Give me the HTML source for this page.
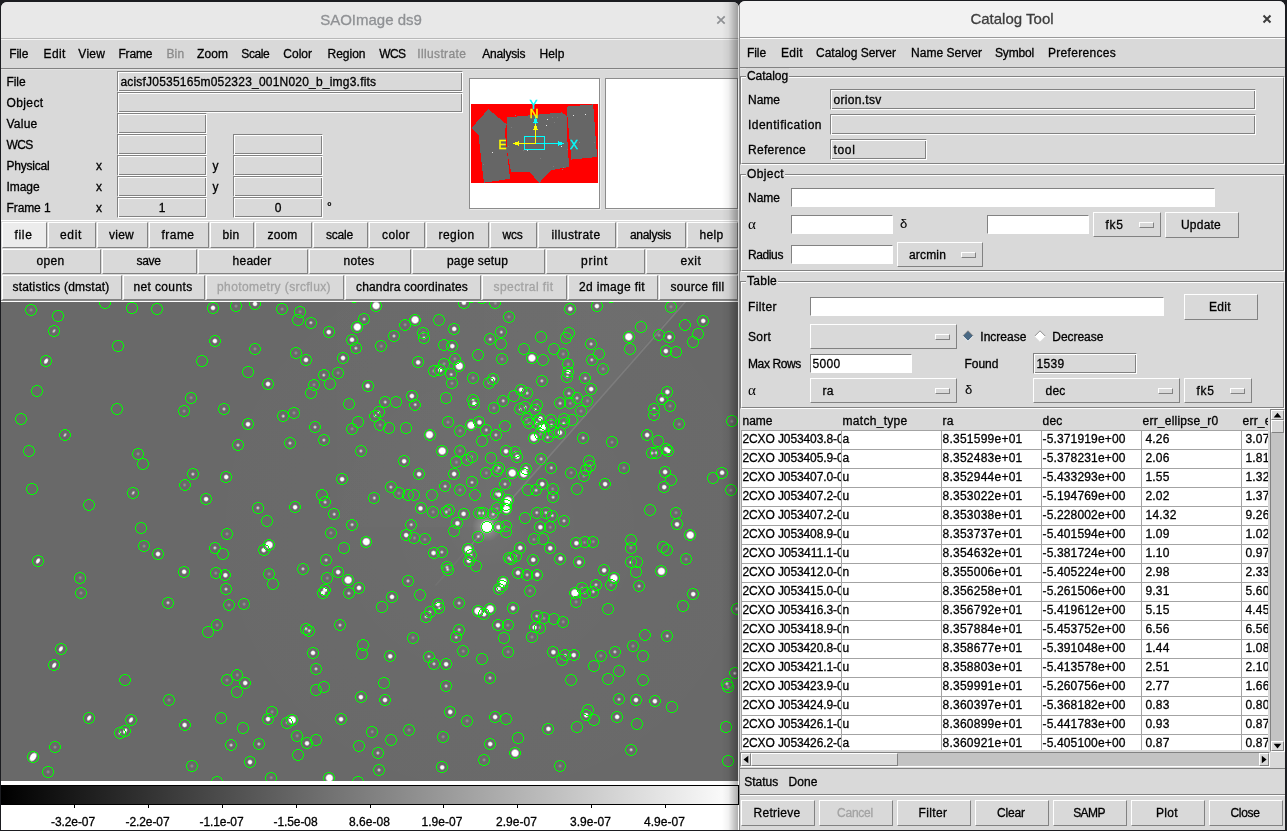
<!DOCTYPE html>
<html><head><meta charset="utf-8"><title>SAOImage ds9</title>
<style>
html,body{margin:0;padding:0;}
body{width:1287px;height:831px;overflow:hidden;background:#1b1c20;position:relative;
 font-family:"Liberation Sans",sans-serif;font-size:12px;color:#000;line-height:16px;}
.abs,.w div,.w span{position:absolute;}
div,span{box-sizing:border-box;}
.w{position:absolute;overflow:hidden;will-change:transform;-webkit-text-stroke:0.3px;}
.t{white-space:pre;position:absolute;height:16px;line-height:16px;}
.btn{position:absolute;background:#d9d9d9;border:1px solid;border-color:#fff #828282 #828282 #fff;
 text-align:center;white-space:pre;padding-right:2px;}
.btn.act{background:#ececec;}
.dis{color:#a3a3a3;}
.mdis{color:#8c8c8c;}
.ent{position:absolute;background:#d9d9d9;border:1px solid;border-color:#828282 #fff #fff #828282;white-space:pre;overflow:hidden;box-shadow:inset 1px 1px 0 #fff,inset -1px -1px 0 #828282;}
.ent.wh{background:#fff;box-shadow:none;}
.mb{position:absolute;background:#d9d9d9;border:1px solid;border-color:#fff #828282 #828282 #fff;white-space:pre;}
.mb i{position:absolute;right:6px;top:50%;margin-top:-3px;width:15px;height:6px;background:#d9d9d9;border:1px solid;border-color:#fff #828282 #828282 #fff;box-sizing:border-box;}
.lf{position:absolute;background:#d9d9d9;white-space:pre;height:16px;line-height:16px;}
.hl{position:absolute;height:1px;}
.cell{position:absolute;width:101px;height:20px;border:1px solid #a3a3a3;background:#fff;overflow:hidden;white-space:pre;line-height:16px;}
</style></head>
<body>
<div class="w" id="ds9" style="left:1px;top:2px;width:738px;height:828px;background:#d9d9d9;border-radius:6px 6px 0 0;">
<div class="abs" style="left:0;top:0;width:738px;height:36px;background:#e8e8e8;"></div>
<div class="hl" style="left:0px;top:36px;width:737px;background:#b8b8b8;"></div>
<div class="hl" style="left:0px;top:37px;width:737px;background:#f4f4f4;"></div>
<span class="t" style="left:1px;width:738px;text-align:center;top:8px;height:20px;line-height:20px;font-size:15px;color:#8f9194;">SAOImage ds9</span>
<svg style="position:absolute;left:715px;top:13px" width="10" height="10" viewBox="0 0 10 10"><path d="M1.3 1.3 L8.7 8.7 M8.7 1.3 L1.3 8.7" stroke="#8f9194" stroke-width="1.7" fill="none"/></svg>
<span class="t " style="left:8.3px;top:44px;letter-spacing:-0.09px;">File</span>
<span class="t " style="left:42.6px;top:44px;letter-spacing:0.33px;">Edit</span>
<span class="t " style="left:77.3px;top:44px;letter-spacing:0.3px;">View</span>
<span class="t " style="left:117.4px;top:44px;letter-spacing:-0.13px;">Frame</span>
<span class="t mdis" style="left:165.4px;top:44px;letter-spacing:0.22px;">Bin</span>
<span class="t " style="left:196px;top:44px;letter-spacing:0.08px;">Zoom</span>
<span class="t " style="left:240.3px;top:44px;letter-spacing:-0.4px;">Scale</span>
<span class="t " style="left:282.2px;top:44px;letter-spacing:0.06px;">Color</span>
<span class="t " style="left:326.5px;top:44px;letter-spacing:-0.01px;">Region</span>
<span class="t " style="left:378.3px;top:44px;letter-spacing:-0.6px;">WCS</span>
<span class="t mdis" style="left:416.2px;top:44px;letter-spacing:0.37px;">Illustrate</span>
<span class="t " style="left:481.3px;top:44px;letter-spacing:-0.21px;">Analysis</span>
<span class="t " style="left:538.6px;top:44px;letter-spacing:0.08px;">Help</span>
<div class="hl" style="left:0px;top:66px;width:737px;background:#828282;"></div>
<div class="hl" style="left:0px;top:67px;width:737px;background:#e4e4e4;"></div>
<span class="t " style="left:5.5px;top:72px;letter-spacing:-0.09px;">File</span>
<span class="t " style="left:5.5px;top:93px;letter-spacing:0.39px;">Object</span>
<span class="t " style="left:5.5px;top:114px;letter-spacing:0.24px;">Value</span>
<span class="t " style="left:5.5px;top:135px;letter-spacing:-0.6px;">WCS</span>
<span class="t " style="left:5.5px;top:156px;letter-spacing:-0.21px;">Physical</span>
<span class="t " style="left:5.5px;top:177px;letter-spacing:-0.07px;">Image</span>
<span class="t " style="left:5.5px;top:198px;letter-spacing:-0.1px;">Frame 1</span>
<span class="t " style="left:95px;top:156px;">x</span>
<span class="t " style="left:95px;top:177px;">x</span>
<span class="t " style="left:95px;top:198px;">x</span>
<span class="t " style="left:211.6px;top:156px;">y</span>
<span class="t " style="left:211.6px;top:177px;">y</span>
<span class="t " style="left:326px;top:197px;">°</span>
<div class="ent " style="left:116px;top:69px;width:346px;height:21px;line-height:20px;letter-spacing:0.21px;padding-left:2.4px;">acisfJ0535165m052323_001N020_b_img3.fits</div>
<div class="ent " style="left:116px;top:90px;width:346px;height:21px;"></div>
<div class="ent " style="left:116px;top:111px;width:90px;height:21px;"></div>
<div class="ent " style="left:116px;top:132px;width:90px;height:21px;"></div>
<div class="ent " style="left:232px;top:132px;width:90px;height:21px;"></div>
<div class="ent " style="left:116px;top:153px;width:90px;height:21px;"></div>
<div class="ent " style="left:232px;top:153px;width:90px;height:21px;"></div>
<div class="ent " style="left:116px;top:174px;width:90px;height:21px;"></div>
<div class="ent " style="left:232px;top:174px;width:90px;height:21px;"></div>
<div class="ent " style="left:116px;top:195px;width:90px;height:21px;line-height:20px;text-align:center;">1</div>
<div class="ent " style="left:232px;top:195px;width:90px;height:21px;line-height:20px;text-align:center;">0</div>
<div class="abs" style="left:468px;top:76px;width:131px;height:131px;background:#fff;border:1px solid #8c8c8c;box-shadow:1px 1px 0 #ececec;"></div>
<div class="abs" style="left:604px;top:76px;width:133px;height:131px;background:#fff;border:1px solid #8c8c8c;box-shadow:1px 1px 0 #ececec;"></div>
<svg style="position:absolute;left:0;top:0" width="737" height="230" viewBox="0 0 737 230" shape-rendering="crispEdges">
<rect x="470" y="102" width="127" height="79" fill="#ff0000"/>
<polygon points="487.3,107.2 505.8,122.4 503.6,127.8 509.0,176.8 482.9,180.7 477.5,133.3 470.3,126.3" fill="#666666"/>
<polygon points="505.8,115.4 561.3,110.4 566.0,114.8 566.7,148.5 568.4,164.8 550.4,168.1 538.4,180.7 528.6,170.3 510.1,170.3 506.4,150.7" fill="#666666"/>
<polygon points="565.6,104.6 592.2,102.4 596.1,155.0 570.4,157.6" fill="#666666"/>
<rect x="507" y="144" width="1" height="1" fill="#7c7c7c"/>
<rect x="522" y="148" width="1" height="1" fill="#7c7c7c"/>
<rect x="551" y="115" width="1" height="1" fill="#7c7c7c"/>
<rect x="482" y="162" width="1" height="1" fill="#7c7c7c"/>
<rect x="510" y="125" width="1" height="1" fill="#7c7c7c"/>
<rect x="593" y="140" width="1" height="1" fill="#7c7c7c"/>
<rect x="575" y="140" width="1" height="1" fill="#7c7c7c"/>
<rect x="553" y="120" width="1" height="1" fill="#7c7c7c"/>
<rect x="552" y="164" width="1" height="1" fill="#7c7c7c"/>
<rect x="539" y="156" width="1" height="1" fill="#7c7c7c"/>
<rect x="556" y="115" width="1" height="1" fill="#7c7c7c"/>
<rect x="566" y="147" width="1" height="1" fill="#7c7c7c"/>
<rect x="514" y="113" width="1" height="1" fill="#7c7c7c"/>
<rect x="578" y="140" width="1" height="1" fill="#7c7c7c"/>
<rect x="562" y="165" width="1" height="1" fill="#7c7c7c"/>
<rect x="561" y="167" width="1" height="1" fill="#7c7c7c"/>
<rect x="546" y="117" width="1" height="1" fill="#e8e8e8"/>
<rect x="545" y="123" width="1" height="1" fill="#e8e8e8"/>
<rect x="584" y="112" width="1" height="1" fill="#e8e8e8"/>
<rect x="572" y="113" width="1" height="1" fill="#e8e8e8"/>
<rect x="560" y="144" width="1" height="1" fill="#e8e8e8"/>
<rect x="526" y="148" width="1" height="1" fill="#e8e8e8"/>
<rect x="491" y="150" width="1" height="1" fill="#e8e8e8"/>
<rect x="523.5" y="134.5" width="20" height="13" fill="none" stroke="#00ffff" stroke-width="1"/>
<path d="M534.5 141.5 H563 M534.5 141.5 V115" stroke="#00ffff" stroke-width="1" fill="none"/>
<path d="M563 141.5 l-6 -2.5 v5 z" fill="#00ffff"/>
<path d="M534.5 115 l-2.5 6 h5 z" fill="#00ffff"/>
<path d="M534.5 141.5 H512 M534.5 141.5 V122" stroke="#ffff00" stroke-width="1" fill="none"/>
<path d="M512 141.5 l6 -2.5 v5 z" fill="#ffff00"/>
<path d="M534.5 122 l-2.5 6 h5 z" fill="#ffff00"/>
</svg>
<svg style="position:absolute;left:0;top:0" width="737" height="230" viewBox="0 0 737 230">
<text x="532.5" y="106.5" text-anchor="middle" font-family="Liberation Sans, sans-serif" font-size="12" fill="#00ffff" stroke="#00ffff" stroke-width="0.4">Y</text>
<text x="533.0" y="116.3" text-anchor="middle" font-family="Liberation Sans, sans-serif" font-size="12" fill="#ffff00" stroke="#ffff00" stroke-width="0.4">N</text>
<text x="501.6" y="147.1" text-anchor="middle" font-family="Liberation Sans, sans-serif" font-size="12" fill="#ffff00" stroke="#ffff00" stroke-width="0.4">E</text>
<text x="573.0" y="147.1" text-anchor="middle" font-family="Liberation Sans, sans-serif" font-size="12" fill="#00ffff" stroke="#00ffff" stroke-width="0.4">X</text>
</svg>
<div class="hl" style="left:0px;top:218px;width:737px;background:#fff;"></div>
<div class="btn act" style="left:1px;top:220px;width:45px;height:26px;line-height:24px;letter-spacing:0.66px;">file</div>
<div class="btn " style="left:47px;top:220px;width:48px;height:26px;line-height:24px;letter-spacing:0.66px;">edit</div>
<div class="btn " style="left:96px;top:220px;width:51px;height:26px;line-height:24px;letter-spacing:0.25px;">view</div>
<div class="btn " style="left:148px;top:220px;width:60px;height:26px;line-height:24px;letter-spacing:0.47px;">frame</div>
<div class="btn " style="left:209px;top:220px;width:44px;height:26px;line-height:24px;letter-spacing:0.33px;">bin</div>
<div class="btn " style="left:254px;top:220px;width:57px;height:26px;line-height:24px;letter-spacing:0.16px;">zoom</div>
<div class="btn " style="left:312px;top:220px;width:55px;height:26px;line-height:24px;letter-spacing:-0.2px;">scale</div>
<div class="btn " style="left:368px;top:220px;width:56px;height:26px;line-height:24px;letter-spacing:0.4px;">color</div>
<div class="btn " style="left:425px;top:220px;width:63px;height:26px;line-height:24px;letter-spacing:0.44px;">region</div>
<div class="btn " style="left:489px;top:220px;width:47px;height:26px;line-height:24px;letter-spacing:-0.22px;">wcs</div>
<div class="btn " style="left:537px;top:220px;width:78px;height:26px;line-height:24px;letter-spacing:0.43px;">illustrate</div>
<div class="btn " style="left:616px;top:220px;width:69px;height:26px;line-height:24px;letter-spacing:-0.29px;">analysis</div>
<div class="btn " style="left:686px;top:220px;width:51px;height:26px;line-height:24px;letter-spacing:0.33px;">help</div>
<div class="btn " style="left:1px;top:247px;width:99px;height:25px;line-height:22px;letter-spacing:0.33px;">open</div>
<div class="btn " style="left:101px;top:247px;width:95px;height:25px;line-height:22px;letter-spacing:-0.34px;">save</div>
<div class="btn " style="left:197px;top:247px;width:110px;height:25px;line-height:22px;letter-spacing:0.27px;">header</div>
<div class="btn " style="left:308px;top:247px;width:102px;height:25px;line-height:22px;letter-spacing:0.33px;">notes</div>
<div class="btn " style="left:411px;top:247px;width:133px;height:25px;line-height:22px;letter-spacing:0.16px;">page setup</div>
<div class="btn " style="left:545px;top:247px;width:99px;height:25px;line-height:22px;letter-spacing:0.73px;">print</div>
<div class="btn " style="left:645px;top:247px;width:92px;height:25px;line-height:22px;letter-spacing:0.58px;">exit</div>
<div class="btn " style="left:1px;top:273px;width:120px;height:25px;line-height:22px;letter-spacing:0.19px;">statistics (dmstat)</div>
<div class="btn " style="left:122px;top:273px;width:82px;height:25px;line-height:22px;letter-spacing:0.37px;">net counts</div>
<div class="btn dis" style="left:205px;top:273px;width:138px;height:25px;line-height:22px;letter-spacing:0.4px;">photometry (srcflux)</div>
<div class="btn " style="left:344px;top:273px;width:136px;height:25px;line-height:22px;letter-spacing:0.17px;">chandra coordinates</div>
<div class="btn dis" style="left:481px;top:273px;width:85px;height:25px;line-height:22px;letter-spacing:0.44px;">spectral fit</div>
<div class="btn " style="left:567px;top:273px;width:90px;height:25px;line-height:22px;letter-spacing:0.33px;">2d image fit</div>
<div class="btn " style="left:658px;top:273px;width:79px;height:25px;line-height:22px;letter-spacing:0.3px;">source fill</div>
<div class="hl" style="left:0px;top:298px;width:737px;background:#8a8a8a;"></div>
<div class="hl" style="left:0px;top:299px;width:737px;background:#fff;"></div>
<div class="abs" id="img" style="left:0px;top:300px;width:737px;height:479px;background:#696969;overflow:hidden;"><svg style="position:absolute;left:0;top:0" width="737" height="479" viewBox="0 0 737 479">
<defs><radialGradient id="glow"><stop offset="0" stop-color="#fff" stop-opacity="0.05"/><stop offset="0.12" stop-color="#fff" stop-opacity="0.022"/><stop offset="0.5" stop-color="#fff" stop-opacity="0.008"/><stop offset="1" stop-color="#fff" stop-opacity="0"/></radialGradient><radialGradient id="s1"><stop offset="0" stop-color="#fff" stop-opacity="0.32"/><stop offset="1" stop-color="#fff" stop-opacity="0"/></radialGradient><radialGradient id="s2"><stop offset="0" stop-color="#fff" stop-opacity="0.95"/><stop offset="0.4" stop-color="#fff" stop-opacity="0.5"/><stop offset="1" stop-color="#fff" stop-opacity="0"/></radialGradient><radialGradient id="s3"><stop offset="0" stop-color="#fff" stop-opacity="1"/><stop offset="0.5" stop-color="#fff" stop-opacity="0.95"/><stop offset="1" stop-color="#fff" stop-opacity="0"/></radialGradient><radialGradient id="s4"><stop offset="0" stop-color="#fff" stop-opacity="1"/><stop offset="0.62" stop-color="#fff" stop-opacity="1"/><stop offset="1" stop-color="#fff" stop-opacity="0"/></radialGradient><linearGradient id="strk" x1="0" y1="0" x2="1" y2="0"><stop offset="0" stop-color="#fff" stop-opacity="0"/><stop offset="0.5" stop-color="#fff" stop-opacity="0.10"/><stop offset="1" stop-color="#fff" stop-opacity="0"/></linearGradient></defs>
<circle cx="486" cy="225" r="330" fill="url(#glow)"/>
<defs><linearGradient id="hp" x1="0" y1="0" x2="1" y2="0"><stop offset="0" stop-color="#fff" stop-opacity="0"/><stop offset="1" stop-color="#fff" stop-opacity="0.035"/></linearGradient></defs>
<polygon points="682,0 486,225 299,225 299,0" fill="url(#hp)"/>
<g transform="translate(486 225) rotate(-48.64)"><rect x="-30" y="-0.8" width="390" height="1.6" fill="#909090" opacity="0.5"/><rect x="-78" y="-0.8" width="48" height="1.6" fill="#8c8c8c" opacity="0.16"/></g>
<circle cx="30.1" cy="8.0" r="2.2" fill="url(#s1)"/>
<ellipse cx="53.0" cy="29.0" rx="2.8" ry="1.8" transform="rotate(-58 53.0 29.0)" fill="url(#s2)"/>
<ellipse cx="45.1" cy="59.1" rx="3.6" ry="2.3" transform="rotate(-58 45.1 59.1)" fill="url(#s3)"/>
<circle cx="183.1" cy="109.1" r="2.2" fill="url(#s1)"/>
<circle cx="212.0" cy="5.9" r="2.9" fill="url(#s3)"/>
<circle cx="235.0" cy="4.1" r="2.2" fill="url(#s1)"/>
<circle cx="254.0" cy="1.9" r="2.9" fill="url(#s3)"/>
<circle cx="281.1" cy="7.1" r="2.2" fill="url(#s1)"/>
<circle cx="299.1" cy="9.8" r="2.2" fill="url(#s1)"/>
<circle cx="309.9" cy="20.7" r="2.2" fill="url(#s2)"/>
<circle cx="327.8" cy="30.1" r="2.9" fill="url(#s3)"/>
<circle cx="363.1" cy="17.1" r="2.2" fill="url(#s2)"/>
<circle cx="356.3" cy="25.0" r="4.4" fill="url(#s4)"/>
<circle cx="351.0" cy="37.7" r="2.9" fill="url(#s3)"/>
<circle cx="354.9" cy="46.2" r="2.2" fill="url(#s2)"/>
<circle cx="213.9" cy="39.0" r="2.9" fill="url(#s3)"/>
<circle cx="254.0" cy="46.9" r="2.2" fill="url(#s1)"/>
<circle cx="294.9" cy="51.0" r="2.2" fill="url(#s1)"/>
<circle cx="305.0" cy="57.9" r="2.9" fill="url(#s3)"/>
<circle cx="342.0" cy="56.0" r="2.9" fill="url(#s3)"/>
<circle cx="322.8" cy="73.1" r="2.2" fill="url(#s2)"/>
<circle cx="337.1" cy="70.9" r="2.2" fill="url(#s1)"/>
<circle cx="267.0" cy="82.0" r="2.9" fill="url(#s3)"/>
<circle cx="313.0" cy="82.8" r="2.2" fill="url(#s1)"/>
<circle cx="366.7" cy="83.9" r="2.9" fill="url(#s3)"/>
<circle cx="190.1" cy="95.8" r="2.2" fill="url(#s1)"/>
<circle cx="223.0" cy="107.0" r="2.2" fill="url(#s2)"/>
<circle cx="293.0" cy="110.9" r="2.2" fill="url(#s1)"/>
<circle cx="282.2" cy="114.1" r="2.2" fill="url(#s2)"/>
<circle cx="375.1" cy="3.6" r="4.4" fill="url(#s4)"/>
<circle cx="462.9" cy="0.7" r="2.9" fill="url(#s3)"/>
<circle cx="494.4" cy="1.2" r="2.2" fill="url(#s1)"/>
<circle cx="507.9" cy="14.9" r="2.2" fill="url(#s1)"/>
<circle cx="414.1" cy="17.8" r="4.4" fill="url(#s4)"/>
<circle cx="404.1" cy="22.8" r="2.2" fill="url(#s1)"/>
<circle cx="453.2" cy="26.9" r="2.9" fill="url(#s3)"/>
<circle cx="422.1" cy="30.8" r="2.2" fill="url(#s1)"/>
<circle cx="423.0" cy="35.8" r="2.2" fill="url(#s2)"/>
<circle cx="393.0" cy="34.0" r="2.2" fill="url(#s2)"/>
<circle cx="380.3" cy="44.1" r="2.2" fill="url(#s1)"/>
<circle cx="500.3" cy="30.1" r="2.2" fill="url(#s2)"/>
<circle cx="489.2" cy="37.3" r="2.2" fill="url(#s2)"/>
<circle cx="451.3" cy="44.1" r="2.9" fill="url(#s3)"/>
<circle cx="501.0" cy="57.1" r="2.2" fill="url(#s1)"/>
<circle cx="530.9" cy="56.0" r="4.4" fill="url(#s4)"/>
<circle cx="417.1" cy="60.4" r="2.9" fill="url(#s3)"/>
<circle cx="453.9" cy="56.8" r="2.2" fill="url(#s1)"/>
<circle cx="443.1" cy="61.8" r="2.2" fill="url(#s1)"/>
<circle cx="458.3" cy="64.0" r="4.4" fill="url(#s4)"/>
<circle cx="439.2" cy="67.9" r="2.9" fill="url(#s3)"/>
<circle cx="432.5" cy="69.0" r="2.2" fill="url(#s1)"/>
<circle cx="450.2" cy="72.4" r="2.2" fill="url(#s2)"/>
<circle cx="451.0" cy="81.3" r="2.2" fill="url(#s1)"/>
<circle cx="472.1" cy="76.0" r="2.2" fill="url(#s1)"/>
<circle cx="492.1" cy="77.0" r="2.9" fill="url(#s3)"/>
<circle cx="487.7" cy="81.0" r="2.2" fill="url(#s1)"/>
<circle cx="540.9" cy="78.9" r="2.2" fill="url(#s2)"/>
<circle cx="520.1" cy="87.8" r="2.9" fill="url(#s3)"/>
<circle cx="526.1" cy="91.1" r="2.2" fill="url(#s2)"/>
<circle cx="410.9" cy="94.0" r="2.9" fill="url(#s3)"/>
<circle cx="414.2" cy="102.7" r="2.2" fill="url(#s2)"/>
<circle cx="472.1" cy="97.9" r="2.2" fill="url(#s2)"/>
<circle cx="473.3" cy="101.8" r="2.9" fill="url(#s3)"/>
<circle cx="384.2" cy="100.1" r="2.2" fill="url(#s2)"/>
<circle cx="502.2" cy="98.9" r="2.2" fill="url(#s2)"/>
<circle cx="492.9" cy="105.9" r="2.2" fill="url(#s1)"/>
<circle cx="536.0" cy="102.7" r="2.2" fill="url(#s1)"/>
<circle cx="524.3" cy="105.2" r="2.2" fill="url(#s2)"/>
<circle cx="519.2" cy="107.3" r="2.2" fill="url(#s2)"/>
<circle cx="534.4" cy="107.6" r="2.2" fill="url(#s2)"/>
<circle cx="377.7" cy="110.2" r="2.2" fill="url(#s2)"/>
<circle cx="374.1" cy="113.8" r="2.2" fill="url(#s2)"/>
<circle cx="569.2" cy="6.9" r="2.9" fill="url(#s3)"/>
<circle cx="595.9" cy="4.1" r="2.9" fill="url(#s3)"/>
<circle cx="670.0" cy="4.8" r="2.2" fill="url(#s1)"/>
<circle cx="702.2" cy="18.9" r="2.9" fill="url(#s3)"/>
<circle cx="627.7" cy="34.8" r="4.4" fill="url(#s4)"/>
<circle cx="658.0" cy="33.2" r="2.2" fill="url(#s1)"/>
<circle cx="668.4" cy="35.1" r="2.9" fill="url(#s3)"/>
<circle cx="590.1" cy="42.0" r="2.2" fill="url(#s2)"/>
<circle cx="664.9" cy="49.1" r="2.9" fill="url(#s3)"/>
<circle cx="562.2" cy="52.0" r="2.2" fill="url(#s1)"/>
<circle cx="590.8" cy="57.9" r="2.2" fill="url(#s2)"/>
<circle cx="567.3" cy="62.1" r="2.2" fill="url(#s1)"/>
<circle cx="602.1" cy="66.9" r="2.2" fill="url(#s1)"/>
<circle cx="567.3" cy="69.8" r="2.9" fill="url(#s3)"/>
<circle cx="566.3" cy="74.8" r="2.2" fill="url(#s2)"/>
<circle cx="584.3" cy="76.3" r="2.2" fill="url(#s2)"/>
<circle cx="590.1" cy="87.1" r="2.9" fill="url(#s3)"/>
<circle cx="568.0" cy="91.4" r="2.2" fill="url(#s2)"/>
<circle cx="576.0" cy="96.1" r="2.2" fill="url(#s2)"/>
<circle cx="586.5" cy="98.9" r="2.2" fill="url(#s1)"/>
<circle cx="559.1" cy="101.3" r="2.2" fill="url(#s2)"/>
<circle cx="569.2" cy="101.3" r="2.2" fill="url(#s1)"/>
<circle cx="580.0" cy="109.1" r="2.2" fill="url(#s1)"/>
<circle cx="666.4" cy="90.0" r="2.9" fill="url(#s3)"/>
<circle cx="660.9" cy="97.5" r="2.9" fill="url(#s3)"/>
<circle cx="669.1" cy="104.0" r="2.2" fill="url(#s1)"/>
<circle cx="653.1" cy="106.6" r="2.2" fill="url(#s2)"/>
<circle cx="653.4" cy="113.1" r="2.2" fill="url(#s1)"/>
<ellipse cx="64.0" cy="133.0" rx="2.8" ry="1.8" transform="rotate(-58 64.0 133.0)" fill="url(#s2)"/>
<circle cx="137.1" cy="151.9" r="2.2" fill="url(#s1)"/>
<ellipse cx="132.2" cy="190.9" rx="2.8" ry="1.8" transform="rotate(-58 132.2 190.9)" fill="url(#s2)"/>
<circle cx="183.6" cy="183.0" r="2.2" fill="url(#s1)"/>
<circle cx="247.0" cy="122.2" r="2.9" fill="url(#s3)"/>
<circle cx="314.0" cy="125.1" r="2.2" fill="url(#s2)"/>
<circle cx="351.1" cy="126.9" r="2.2" fill="url(#s1)"/>
<circle cx="237.0" cy="143.1" r="2.2" fill="url(#s2)"/>
<circle cx="289.0" cy="141.1" r="2.2" fill="url(#s2)"/>
<circle cx="322.9" cy="138.1" r="2.2" fill="url(#s2)"/>
<circle cx="359.9" cy="149.0" r="2.2" fill="url(#s2)"/>
<circle cx="191.9" cy="172.1" r="2.2" fill="url(#s2)"/>
<circle cx="225.2" cy="175.0" r="2.9" fill="url(#s3)"/>
<circle cx="341.1" cy="177.2" r="2.9" fill="url(#s3)"/>
<circle cx="205.1" cy="197.1" r="2.9" fill="url(#s3)"/>
<circle cx="324.1" cy="200.2" r="2.2" fill="url(#s2)"/>
<circle cx="256.9" cy="205.9" r="2.2" fill="url(#s2)"/>
<circle cx="294.1" cy="205.2" r="2.9" fill="url(#s3)"/>
<circle cx="333.2" cy="212.2" r="2.2" fill="url(#s2)"/>
<circle cx="351.1" cy="222.7" r="2.2" fill="url(#s2)"/>
<circle cx="226.0" cy="231.9" r="2.2" fill="url(#s1)"/>
<circle cx="329.9" cy="230.9" r="2.2" fill="url(#s1)"/>
<circle cx="379.1" cy="123.0" r="2.2" fill="url(#s1)"/>
<circle cx="447.0" cy="120.2" r="2.2" fill="url(#s1)"/>
<circle cx="428.5" cy="132.7" r="4.4" fill="url(#s4)"/>
<circle cx="459.1" cy="128.8" r="2.2" fill="url(#s1)"/>
<circle cx="470.1" cy="123.3" r="4.4" fill="url(#s4)"/>
<circle cx="478.5" cy="120.4" r="2.9" fill="url(#s3)"/>
<circle cx="485.3" cy="128.0" r="2.2" fill="url(#s2)"/>
<circle cx="494.9" cy="133.0" r="2.2" fill="url(#s2)"/>
<circle cx="441.2" cy="149.0" r="4.4" fill="url(#s4)"/>
<circle cx="459.0" cy="149.0" r="2.2" fill="url(#s1)"/>
<circle cx="470.8" cy="154.8" r="2.2" fill="url(#s1)"/>
<circle cx="466.1" cy="157.7" r="2.2" fill="url(#s1)"/>
<circle cx="455.4" cy="160.2" r="2.2" fill="url(#s1)"/>
<circle cx="403.1" cy="159.2" r="2.9" fill="url(#s3)"/>
<circle cx="505.0" cy="149.3" r="2.9" fill="url(#s3)"/>
<circle cx="514.1" cy="150.1" r="2.2" fill="url(#s1)"/>
<circle cx="516.3" cy="154.8" r="2.9" fill="url(#s3)"/>
<circle cx="540.1" cy="157.0" r="2.2" fill="url(#s2)"/>
<circle cx="550.3" cy="165.9" r="2.2" fill="url(#s2)"/>
<circle cx="497.8" cy="165.9" r="2.2" fill="url(#s2)"/>
<circle cx="496.1" cy="168.8" r="2.2" fill="url(#s1)"/>
<circle cx="485.3" cy="171.0" r="2.2" fill="url(#s1)"/>
<circle cx="511.3" cy="171.0" r="4.4" fill="url(#s4)"/>
<circle cx="525.0" cy="166.7" r="2.9" fill="url(#s3)"/>
<circle cx="522.8" cy="171.7" r="4.4" fill="url(#s4)"/>
<circle cx="418.1" cy="172.1" r="2.9" fill="url(#s3)"/>
<circle cx="453.1" cy="172.0" r="2.9" fill="url(#s3)"/>
<circle cx="471.0" cy="180.4" r="2.2" fill="url(#s2)"/>
<circle cx="504.0" cy="182.1" r="2.2" fill="url(#s2)"/>
<circle cx="541.2" cy="182.1" r="2.9" fill="url(#s3)"/>
<circle cx="444.1" cy="184.3" r="2.2" fill="url(#s2)"/>
<circle cx="459.0" cy="188.0" r="2.2" fill="url(#s1)"/>
<circle cx="389.9" cy="185.1" r="2.2" fill="url(#s2)"/>
<circle cx="397.9" cy="191.2" r="2.2" fill="url(#s1)"/>
<circle cx="373.3" cy="196.0" r="2.2" fill="url(#s2)"/>
<circle cx="535.1" cy="188.3" r="2.2" fill="url(#s2)"/>
<circle cx="551.7" cy="186.9" r="2.2" fill="url(#s1)"/>
<circle cx="552.1" cy="195.3" r="2.2" fill="url(#s2)"/>
<circle cx="495.4" cy="191.9" r="2.2" fill="url(#s2)"/>
<circle cx="498.0" cy="192.7" r="2.9" fill="url(#s3)"/>
<circle cx="506.9" cy="198.4" r="4.4" fill="url(#s4)"/>
<circle cx="505.5" cy="202.8" r="2.9" fill="url(#s3)"/>
<circle cx="505.5" cy="207.4" r="4.4" fill="url(#s4)"/>
<circle cx="419.5" cy="206.4" r="2.9" fill="url(#s3)"/>
<circle cx="432.1" cy="210.0" r="2.2" fill="url(#s1)"/>
<circle cx="445.3" cy="210.0" r="2.2" fill="url(#s2)"/>
<circle cx="448.1" cy="207.8" r="2.2" fill="url(#s1)"/>
<circle cx="462.6" cy="211.9" r="2.9" fill="url(#s3)"/>
<circle cx="478.5" cy="211.1" r="2.2" fill="url(#s2)"/>
<circle cx="482.4" cy="211.1" r="2.2" fill="url(#s2)"/>
<circle cx="492.1" cy="212.2" r="2.2" fill="url(#s2)"/>
<circle cx="496.1" cy="206.4" r="2.2" fill="url(#s1)"/>
<circle cx="535.8" cy="210.7" r="2.2" fill="url(#s2)"/>
<circle cx="544.9" cy="210.7" r="2.2" fill="url(#s2)"/>
<circle cx="551.3" cy="213.6" r="2.2" fill="url(#s2)"/>
<circle cx="410.2" cy="222.7" r="2.2" fill="url(#s2)"/>
<circle cx="456.4" cy="221.3" r="2.9" fill="url(#s3)"/>
<circle cx="486.0" cy="224.7" r="15" fill="url(#s1)"/>
<circle cx="486.0" cy="224.7" r="7.0" fill="url(#s4)"/>
<circle cx="497.5" cy="225.2" r="2.9" fill="url(#s3)"/>
<circle cx="539.4" cy="225.2" r="2.9" fill="url(#s3)"/>
<circle cx="549.2" cy="225.2" r="2.2" fill="url(#s1)"/>
<circle cx="405.1" cy="233.1" r="2.9" fill="url(#s3)"/>
<circle cx="413.5" cy="236.0" r="2.2" fill="url(#s1)"/>
<circle cx="423.9" cy="237.4" r="2.2" fill="url(#s1)"/>
<circle cx="477.3" cy="234.5" r="2.2" fill="url(#s2)"/>
<circle cx="532.9" cy="237.4" r="2.2" fill="url(#s1)"/>
<circle cx="582.2" cy="136.0" r="2.2" fill="url(#s2)"/>
<circle cx="611.0" cy="140.2" r="2.2" fill="url(#s1)"/>
<circle cx="678.2" cy="122.2" r="2.2" fill="url(#s1)"/>
<circle cx="730.9" cy="119.3" r="2.2" fill="url(#s1)"/>
<circle cx="646.1" cy="133.0" r="2.9" fill="url(#s3)"/>
<circle cx="665.2" cy="147.2" r="2.9" fill="url(#s3)"/>
<circle cx="667.4" cy="149.0" r="2.9" fill="url(#s3)"/>
<circle cx="651.1" cy="151.1" r="2.2" fill="url(#s2)"/>
<circle cx="655.1" cy="150.8" r="2.2" fill="url(#s2)"/>
<circle cx="589.1" cy="163.8" r="2.2" fill="url(#s1)"/>
<circle cx="584.6" cy="168.1" r="2.2" fill="url(#s1)"/>
<circle cx="582.9" cy="174.2" r="2.2" fill="url(#s1)"/>
<circle cx="570.2" cy="170.7" r="2.2" fill="url(#s1)"/>
<circle cx="622.9" cy="165.9" r="2.2" fill="url(#s1)"/>
<circle cx="664.1" cy="170.0" r="2.9" fill="url(#s3)"/>
<circle cx="663.2" cy="185.1" r="2.9" fill="url(#s3)"/>
<circle cx="604.1" cy="182.1" r="2.9" fill="url(#s3)"/>
<circle cx="721.1" cy="170.7" r="2.9" fill="url(#s3)"/>
<circle cx="729.9" cy="188.3" r="2.2" fill="url(#s1)"/>
<circle cx="675.0" cy="210.7" r="2.2" fill="url(#s1)"/>
<circle cx="676.0" cy="222.3" r="2.9" fill="url(#s3)"/>
<circle cx="689.3" cy="233.1" r="4.4" fill="url(#s4)"/>
<circle cx="563.0" cy="218.9" r="2.2" fill="url(#s2)"/>
<circle cx="143.1" cy="244.1" r="2.2" fill="url(#s1)"/>
<circle cx="157.0" cy="252.0" r="2.9" fill="url(#s3)"/>
<ellipse cx="37.0" cy="258.9" rx="3.6" ry="2.3" transform="rotate(-58 37.0 258.9)" fill="url(#s3)"/>
<circle cx="79.2" cy="275.8" r="2.2" fill="url(#s1)"/>
<circle cx="80.0" cy="291.0" r="2.2" fill="url(#s1)"/>
<circle cx="183.1" cy="269.8" r="2.9" fill="url(#s3)"/>
<circle cx="167.0" cy="300.8" r="2.2" fill="url(#s2)"/>
<ellipse cx="59.9" cy="346.9" rx="3.6" ry="2.3" transform="rotate(-58 59.9 346.9)" fill="url(#s3)"/>
<circle cx="213.9" cy="245.9" r="2.2" fill="url(#s2)"/>
<circle cx="268.1" cy="242.9" r="4.4" fill="url(#s4)"/>
<circle cx="262.7" cy="248.1" r="2.9" fill="url(#s3)"/>
<circle cx="365.3" cy="239.7" r="4.4" fill="url(#s4)"/>
<circle cx="325.1" cy="258.1" r="2.2" fill="url(#s2)"/>
<circle cx="302.0" cy="266.9" r="2.2" fill="url(#s2)"/>
<circle cx="337.1" cy="270.1" r="2.9" fill="url(#s3)"/>
<circle cx="326.3" cy="276.1" r="2.2" fill="url(#s1)"/>
<circle cx="347.2" cy="278.0" r="4.4" fill="url(#s4)"/>
<circle cx="358.0" cy="285.9" r="2.9" fill="url(#s3)"/>
<circle cx="347.9" cy="291.3" r="2.2" fill="url(#s2)"/>
<circle cx="324.1" cy="287.8" r="2.9" fill="url(#s3)"/>
<circle cx="321.9" cy="291.0" r="2.9" fill="url(#s3)"/>
<circle cx="214.8" cy="271.1" r="2.2" fill="url(#s1)"/>
<circle cx="224.4" cy="273.2" r="2.9" fill="url(#s3)"/>
<circle cx="268.1" cy="271.9" r="2.2" fill="url(#s1)"/>
<circle cx="225.0" cy="287.1" r="2.2" fill="url(#s2)"/>
<circle cx="228.0" cy="303.0" r="2.2" fill="url(#s1)"/>
<circle cx="243.1" cy="302.1" r="2.2" fill="url(#s1)"/>
<circle cx="216.1" cy="323.1" r="2.2" fill="url(#s1)"/>
<circle cx="305.0" cy="326.8" r="2.2" fill="url(#s2)"/>
<circle cx="308.2" cy="328.8" r="2.2" fill="url(#s2)"/>
<circle cx="339.0" cy="323.1" r="2.2" fill="url(#s2)"/>
<circle cx="312.0" cy="350.9" r="2.9" fill="url(#s3)"/>
<circle cx="432.5" cy="251.0" r="2.9" fill="url(#s3)"/>
<circle cx="440.9" cy="250.1" r="2.2" fill="url(#s2)"/>
<circle cx="467.2" cy="247.4" r="4.4" fill="url(#s4)"/>
<circle cx="470.1" cy="252.7" r="2.2" fill="url(#s2)"/>
<circle cx="467.9" cy="258.8" r="2.9" fill="url(#s3)"/>
<circle cx="446.0" cy="265.3" r="2.2" fill="url(#s2)"/>
<circle cx="446.7" cy="267.6" r="2.2" fill="url(#s2)"/>
<circle cx="519.2" cy="245.9" r="2.9" fill="url(#s3)"/>
<circle cx="515.2" cy="253.9" r="2.2" fill="url(#s1)"/>
<circle cx="507.9" cy="256.0" r="2.2" fill="url(#s2)"/>
<circle cx="509.8" cy="257.5" r="2.2" fill="url(#s2)"/>
<circle cx="532.2" cy="257.8" r="2.9" fill="url(#s3)"/>
<circle cx="549.2" cy="246.2" r="2.9" fill="url(#s3)"/>
<circle cx="517.0" cy="270.8" r="2.9" fill="url(#s3)"/>
<circle cx="526.1" cy="272.9" r="2.2" fill="url(#s2)"/>
<circle cx="536.2" cy="272.7" r="2.9" fill="url(#s3)"/>
<circle cx="502.2" cy="279.7" r="4.4" fill="url(#s4)"/>
<circle cx="501.1" cy="283.8" r="2.9" fill="url(#s3)"/>
<circle cx="497.5" cy="287.1" r="2.9" fill="url(#s3)"/>
<circle cx="529.0" cy="288.8" r="2.2" fill="url(#s1)"/>
<circle cx="407.0" cy="279.0" r="2.2" fill="url(#s2)"/>
<circle cx="391.0" cy="294.9" r="2.9" fill="url(#s3)"/>
<circle cx="436.9" cy="302.1" r="2.9" fill="url(#s3)"/>
<circle cx="438.3" cy="306.2" r="2.2" fill="url(#s2)"/>
<circle cx="428.9" cy="310.1" r="2.2" fill="url(#s2)"/>
<circle cx="425.0" cy="314.8" r="2.2" fill="url(#s2)"/>
<circle cx="458.1" cy="301.1" r="2.2" fill="url(#s2)"/>
<circle cx="477.0" cy="309.0" r="4.4" fill="url(#s4)"/>
<circle cx="483.1" cy="312.2" r="2.9" fill="url(#s3)"/>
<circle cx="489.2" cy="306.9" r="4.4" fill="url(#s4)"/>
<circle cx="512.0" cy="306.2" r="2.9" fill="url(#s3)"/>
<circle cx="535.8" cy="314.1" r="2.2" fill="url(#s2)"/>
<circle cx="543.0" cy="316.3" r="2.2" fill="url(#s1)"/>
<circle cx="497.0" cy="323.2" r="2.9" fill="url(#s3)"/>
<circle cx="506.9" cy="323.2" r="2.2" fill="url(#s1)"/>
<circle cx="533.6" cy="325.4" r="2.9" fill="url(#s3)"/>
<circle cx="538.7" cy="325.7" r="2.2" fill="url(#s1)"/>
<circle cx="531.0" cy="335.0" r="2.2" fill="url(#s1)"/>
<circle cx="458.1" cy="327.8" r="2.2" fill="url(#s2)"/>
<circle cx="455.2" cy="335.3" r="2.2" fill="url(#s2)"/>
<circle cx="412.0" cy="335.8" r="2.2" fill="url(#s1)"/>
<circle cx="462.2" cy="349.2" r="2.2" fill="url(#s1)"/>
<circle cx="507.1" cy="349.9" r="2.2" fill="url(#s1)"/>
<circle cx="389.2" cy="354.3" r="2.9" fill="url(#s3)"/>
<circle cx="427.9" cy="354.5" r="2.2" fill="url(#s2)"/>
<circle cx="552.4" cy="350.2" r="2.9" fill="url(#s3)"/>
<circle cx="575.4" cy="241.2" r="2.9" fill="url(#s3)"/>
<circle cx="583.6" cy="240.4" r="2.2" fill="url(#s1)"/>
<circle cx="592.3" cy="239.7" r="2.2" fill="url(#s1)"/>
<circle cx="629.8" cy="245.9" r="2.2" fill="url(#s1)"/>
<circle cx="685.1" cy="257.1" r="2.2" fill="url(#s1)"/>
<circle cx="559.5" cy="256.6" r="2.9" fill="url(#s3)"/>
<circle cx="578.1" cy="260.4" r="2.9" fill="url(#s3)"/>
<circle cx="629.8" cy="260.4" r="2.2" fill="url(#s2)"/>
<circle cx="660.4" cy="269.3" r="4.4" fill="url(#s4)"/>
<circle cx="603.1" cy="268.3" r="2.9" fill="url(#s3)"/>
<circle cx="612.9" cy="276.1" r="4.4" fill="url(#s4)"/>
<circle cx="610.0" cy="283.0" r="2.2" fill="url(#s1)"/>
<circle cx="595.0" cy="282.8" r="2.2" fill="url(#s2)"/>
<circle cx="638.1" cy="284.1" r="2.2" fill="url(#s2)"/>
<circle cx="581.0" cy="285.9" r="2.2" fill="url(#s1)"/>
<circle cx="573.9" cy="291.0" r="4.4" fill="url(#s4)"/>
<circle cx="583.6" cy="291.0" r="2.2" fill="url(#s1)"/>
<circle cx="592.3" cy="289.8" r="2.2" fill="url(#s2)"/>
<circle cx="575.1" cy="299.9" r="2.2" fill="url(#s1)"/>
<circle cx="692.2" cy="292.1" r="2.9" fill="url(#s3)"/>
<circle cx="735.7" cy="306.9" r="2.2" fill="url(#s2)"/>
<circle cx="562.2" cy="319.9" r="2.2" fill="url(#s1)"/>
<circle cx="666.2" cy="334.0" r="2.2" fill="url(#s2)"/>
<circle cx="632.0" cy="344.0" r="2.2" fill="url(#s1)"/>
<circle cx="613.9" cy="349.9" r="2.2" fill="url(#s2)"/>
<circle cx="599.9" cy="353.8" r="2.2" fill="url(#s1)"/>
<circle cx="572.8" cy="353.1" r="2.9" fill="url(#s3)"/>
<circle cx="564.4" cy="353.1" r="2.2" fill="url(#s2)"/>
<ellipse cx="53.2" cy="363.3" rx="3.6" ry="2.3" transform="rotate(-58 53.2 363.3)" fill="url(#s3)"/>
<circle cx="168.0" cy="398.0" r="2.2" fill="url(#s1)"/>
<ellipse cx="88.1" cy="416.0" rx="3.6" ry="2.3" transform="rotate(-58 88.1 416.0)" fill="url(#s3)"/>
<ellipse cx="130.0" cy="417.9" rx="3.6" ry="2.3" transform="rotate(-58 130.0 417.9)" fill="url(#s3)"/>
<ellipse cx="124.1" cy="429.0" rx="3.6" ry="2.3" transform="rotate(-58 124.1 429.0)" fill="url(#s3)"/>
<ellipse cx="118.9" cy="430.8" rx="2.8" ry="1.8" transform="rotate(-58 118.9 430.8)" fill="url(#s2)"/>
<circle cx="183.6" cy="423.0" r="2.9" fill="url(#s3)"/>
<circle cx="54.0" cy="445.1" r="2.2" fill="url(#s1)"/>
<ellipse cx="32.1" cy="455.0" rx="5.5" ry="3.5" transform="rotate(-58 32.1 455.0)" fill="url(#s4)"/>
<circle cx="47.1" cy="469.9" r="2.2" fill="url(#s1)"/>
<circle cx="315.0" cy="366.9" r="2.2" fill="url(#s2)"/>
<circle cx="236.3" cy="373.0" r="2.2" fill="url(#s1)"/>
<circle cx="226.0" cy="378.1" r="2.2" fill="url(#s1)"/>
<circle cx="244.2" cy="381.0" r="2.9" fill="url(#s3)"/>
<circle cx="359.9" cy="395.1" r="2.9" fill="url(#s3)"/>
<circle cx="271.1" cy="409.8" r="2.2" fill="url(#s1)"/>
<circle cx="267.0" cy="417.1" r="2.9" fill="url(#s3)"/>
<circle cx="291.2" cy="417.8" r="4.4" fill="url(#s4)"/>
<circle cx="285.8" cy="420.8" r="2.2" fill="url(#s1)"/>
<circle cx="340.0" cy="417.2" r="2.9" fill="url(#s3)"/>
<circle cx="296.2" cy="433.8" r="2.2" fill="url(#s1)"/>
<circle cx="306.0" cy="441.3" r="2.9" fill="url(#s3)"/>
<circle cx="230.1" cy="443.1" r="2.2" fill="url(#s2)"/>
<circle cx="257.9" cy="442.0" r="2.2" fill="url(#s2)"/>
<circle cx="249.0" cy="460.1" r="2.9" fill="url(#s3)"/>
<circle cx="190.9" cy="464.0" r="2.2" fill="url(#s1)"/>
<circle cx="270.2" cy="475.7" r="2.2" fill="url(#s1)"/>
<circle cx="328.4" cy="476.0" r="4.4" fill="url(#s4)"/>
<circle cx="433.0" cy="361.9" r="2.2" fill="url(#s2)"/>
<circle cx="445.1" cy="362.2" r="2.9" fill="url(#s3)"/>
<circle cx="489.0" cy="376.0" r="2.2" fill="url(#s2)"/>
<circle cx="445.1" cy="384.0" r="2.2" fill="url(#s2)"/>
<circle cx="384.0" cy="398.0" r="2.9" fill="url(#s3)"/>
<circle cx="449.2" cy="410.0" r="2.9" fill="url(#s3)"/>
<circle cx="466.1" cy="418.9" r="2.2" fill="url(#s1)"/>
<circle cx="494.1" cy="415.0" r="2.9" fill="url(#s3)"/>
<circle cx="371.2" cy="429.8" r="2.2" fill="url(#s1)"/>
<circle cx="408.0" cy="428.0" r="2.2" fill="url(#s1)"/>
<circle cx="442.1" cy="434.8" r="2.2" fill="url(#s1)"/>
<circle cx="547.4" cy="426.9" r="2.9" fill="url(#s3)"/>
<circle cx="489.2" cy="442.0" r="2.9" fill="url(#s3)"/>
<circle cx="514.1" cy="451.1" r="4.4" fill="url(#s4)"/>
<circle cx="376.9" cy="451.0" r="2.2" fill="url(#s2)"/>
<circle cx="483.1" cy="457.9" r="2.2" fill="url(#s1)"/>
<circle cx="441.2" cy="465.4" r="2.9" fill="url(#s3)"/>
<circle cx="378.0" cy="468.0" r="2.2" fill="url(#s2)"/>
<circle cx="733.8" cy="371.3" r="2.2" fill="url(#s2)"/>
<circle cx="725.9" cy="381.8" r="2.2" fill="url(#s2)"/>
<circle cx="727.3" cy="385.0" r="2.2" fill="url(#s1)"/>
<circle cx="618.0" cy="397.3" r="2.2" fill="url(#s2)"/>
<circle cx="635.0" cy="398.0" r="2.9" fill="url(#s3)"/>
<circle cx="653.9" cy="399.2" r="2.9" fill="url(#s3)"/>
<circle cx="585.1" cy="413.2" r="2.9" fill="url(#s3)"/>
<circle cx="616.1" cy="414.9" r="2.9" fill="url(#s3)"/>
<circle cx="630.1" cy="447.8" r="2.2" fill="url(#s2)"/>
<circle cx="559.1" cy="464.0" r="2.2" fill="url(#s1)"/>
<circle cx="525.6" cy="117.1" r="2.2" fill="url(#s1)"/>
<circle cx="528.0" cy="121.3" r="2.2" fill="url(#s1)"/>
<circle cx="535.5" cy="121.0" r="2.2" fill="url(#s2)"/>
<circle cx="539.4" cy="116.6" r="2.9" fill="url(#s3)"/>
<circle cx="541.5" cy="125.4" r="4.4" fill="url(#s4)"/>
<circle cx="550.1" cy="118.0" r="2.2" fill="url(#s1)"/>
<circle cx="550.5" cy="123.0" r="2.2" fill="url(#s2)"/>
<circle cx="562.7" cy="121.3" r="2.2" fill="url(#s2)"/>
<circle cx="559.0" cy="130.6" r="2.9" fill="url(#s3)"/>
<circle cx="532.9" cy="135.6" r="4.4" fill="url(#s4)"/>
<circle cx="546.6" cy="135.3" r="2.2" fill="url(#s2)"/>
<circle cx="539.4" cy="132.0" r="2.2" fill="url(#s1)"/>
</svg>
<svg style="position:absolute;left:0;top:0" width="737" height="479" viewBox="0 0 737 479" shape-rendering="crispEdges"><defs><path id="c" fill="#00ff00" d="M4 0h4v1h-4zM2 1h2v1h-2zM8 1h2v1h-2zM1 2h1v2h-1zM10 2h1v2h-1zM0 4h1v4h-1zM11 4h1v4h-1zM1 8h1v2h-1zM10 8h1v2h-1zM2 10h2v1h-2zM8 10h2v1h-2zM4 11h4v1h-4z"/></defs>
<use href="#c" x="24" y="2"/>
<use href="#c" x="51" y="8"/>
<use href="#c" x="47" y="23"/>
<use href="#c" x="98" y="-5"/>
<use href="#c" x="125" y="0"/>
<use href="#c" x="150" y="1"/>
<use href="#c" x="111" y="38"/>
<use href="#c" x="39" y="53"/>
<use href="#c" x="30" y="83"/>
<use href="#c" x="110" y="101"/>
<use href="#c" x="14" y="111"/>
<use href="#c" x="177" y="103"/>
<use href="#c" x="206" y="0"/>
<use href="#c" x="229" y="-2"/>
<use href="#c" x="248" y="-4"/>
<use href="#c" x="275" y="1"/>
<use href="#c" x="293" y="4"/>
<use href="#c" x="291" y="12"/>
<use href="#c" x="304" y="15"/>
<use href="#c" x="322" y="24"/>
<use href="#c" x="347" y="-11"/>
<use href="#c" x="357" y="11"/>
<use href="#c" x="350" y="19"/>
<use href="#c" x="345" y="32"/>
<use href="#c" x="349" y="40"/>
<use href="#c" x="208" y="33"/>
<use href="#c" x="248" y="41"/>
<use href="#c" x="289" y="45"/>
<use href="#c" x="299" y="52"/>
<use href="#c" x="336" y="50"/>
<use href="#c" x="195" y="53"/>
<use href="#c" x="241" y="64"/>
<use href="#c" x="317" y="67"/>
<use href="#c" x="331" y="65"/>
<use href="#c" x="261" y="76"/>
<use href="#c" x="307" y="77"/>
<use href="#c" x="323" y="76"/>
<use href="#c" x="304" y="85"/>
<use href="#c" x="361" y="78"/>
<use href="#c" x="184" y="90"/>
<use href="#c" x="342" y="96"/>
<use href="#c" x="217" y="101"/>
<use href="#c" x="287" y="105"/>
<use href="#c" x="276" y="108"/>
<use href="#c" x="369" y="-2"/>
<use href="#c" x="457" y="-5"/>
<use href="#c" x="464" y="-11"/>
<use href="#c" x="475" y="-10"/>
<use href="#c" x="488" y="-5"/>
<use href="#c" x="502" y="9"/>
<use href="#c" x="408" y="12"/>
<use href="#c" x="398" y="17"/>
<use href="#c" x="432" y="12"/>
<use href="#c" x="447" y="21"/>
<use href="#c" x="416" y="25"/>
<use href="#c" x="417" y="30"/>
<use href="#c" x="387" y="28"/>
<use href="#c" x="374" y="38"/>
<use href="#c" x="494" y="24"/>
<use href="#c" x="483" y="31"/>
<use href="#c" x="494" y="36"/>
<use href="#c" x="534" y="29"/>
<use href="#c" x="437" y="37"/>
<use href="#c" x="445" y="38"/>
<use href="#c" x="517" y="41"/>
<use href="#c" x="547" y="41"/>
<use href="#c" x="471" y="47"/>
<use href="#c" x="495" y="51"/>
<use href="#c" x="525" y="50"/>
<use href="#c" x="536" y="52"/>
<use href="#c" x="411" y="54"/>
<use href="#c" x="448" y="51"/>
<use href="#c" x="437" y="56"/>
<use href="#c" x="452" y="58"/>
<use href="#c" x="433" y="62"/>
<use href="#c" x="427" y="63"/>
<use href="#c" x="444" y="66"/>
<use href="#c" x="445" y="75"/>
<use href="#c" x="466" y="70"/>
<use href="#c" x="486" y="71"/>
<use href="#c" x="482" y="75"/>
<use href="#c" x="535" y="73"/>
<use href="#c" x="514" y="82"/>
<use href="#c" x="520" y="85"/>
<use href="#c" x="507" y="88"/>
<use href="#c" x="405" y="88"/>
<use href="#c" x="408" y="97"/>
<use href="#c" x="439" y="90"/>
<use href="#c" x="466" y="92"/>
<use href="#c" x="467" y="96"/>
<use href="#c" x="378" y="94"/>
<use href="#c" x="389" y="94"/>
<use href="#c" x="496" y="93"/>
<use href="#c" x="487" y="100"/>
<use href="#c" x="530" y="97"/>
<use href="#c" x="518" y="99"/>
<use href="#c" x="513" y="101"/>
<use href="#c" x="528" y="102"/>
<use href="#c" x="372" y="104"/>
<use href="#c" x="368" y="108"/>
<use href="#c" x="563" y="1"/>
<use href="#c" x="590" y="-2"/>
<use href="#c" x="604" y="-11"/>
<use href="#c" x="664" y="-1"/>
<use href="#c" x="696" y="13"/>
<use href="#c" x="678" y="17"/>
<use href="#c" x="634" y="19"/>
<use href="#c" x="622" y="29"/>
<use href="#c" x="562" y="25"/>
<use href="#c" x="559" y="30"/>
<use href="#c" x="652" y="27"/>
<use href="#c" x="662" y="29"/>
<use href="#c" x="691" y="26"/>
<use href="#c" x="686" y="34"/>
<use href="#c" x="584" y="36"/>
<use href="#c" x="623" y="41"/>
<use href="#c" x="659" y="43"/>
<use href="#c" x="669" y="44"/>
<use href="#c" x="556" y="46"/>
<use href="#c" x="592" y="46"/>
<use href="#c" x="585" y="52"/>
<use href="#c" x="561" y="56"/>
<use href="#c" x="596" y="61"/>
<use href="#c" x="561" y="64"/>
<use href="#c" x="560" y="69"/>
<use href="#c" x="578" y="70"/>
<use href="#c" x="584" y="81"/>
<use href="#c" x="562" y="85"/>
<use href="#c" x="570" y="90"/>
<use href="#c" x="580" y="93"/>
<use href="#c" x="553" y="95"/>
<use href="#c" x="563" y="95"/>
<use href="#c" x="574" y="103"/>
<use href="#c" x="660" y="84"/>
<use href="#c" x="655" y="91"/>
<use href="#c" x="663" y="98"/>
<use href="#c" x="647" y="101"/>
<use href="#c" x="647" y="107"/>
<use href="#c" x="58" y="127"/>
<use href="#c" x="22" y="143"/>
<use href="#c" x="131" y="146"/>
<use href="#c" x="136" y="156"/>
<use href="#c" x="25" y="181"/>
<use href="#c" x="126" y="185"/>
<use href="#c" x="82" y="197"/>
<use href="#c" x="178" y="177"/>
<use href="#c" x="134" y="220"/>
<use href="#c" x="241" y="116"/>
<use href="#c" x="308" y="119"/>
<use href="#c" x="345" y="121"/>
<use href="#c" x="351" y="114"/>
<use href="#c" x="231" y="137"/>
<use href="#c" x="283" y="135"/>
<use href="#c" x="317" y="132"/>
<use href="#c" x="354" y="143"/>
<use href="#c" x="186" y="166"/>
<use href="#c" x="219" y="169"/>
<use href="#c" x="335" y="171"/>
<use href="#c" x="199" y="191"/>
<use href="#c" x="315" y="187"/>
<use href="#c" x="318" y="194"/>
<use href="#c" x="251" y="200"/>
<use href="#c" x="288" y="199"/>
<use href="#c" x="260" y="213"/>
<use href="#c" x="327" y="206"/>
<use href="#c" x="345" y="217"/>
<use href="#c" x="220" y="226"/>
<use href="#c" x="324" y="225"/>
<use href="#c" x="373" y="117"/>
<use href="#c" x="382" y="120"/>
<use href="#c" x="399" y="120"/>
<use href="#c" x="441" y="114"/>
<use href="#c" x="423" y="127"/>
<use href="#c" x="453" y="123"/>
<use href="#c" x="464" y="117"/>
<use href="#c" x="472" y="114"/>
<use href="#c" x="479" y="122"/>
<use href="#c" x="489" y="127"/>
<use href="#c" x="498" y="118"/>
<use href="#c" x="475" y="133"/>
<use href="#c" x="435" y="143"/>
<use href="#c" x="453" y="143"/>
<use href="#c" x="465" y="149"/>
<use href="#c" x="460" y="152"/>
<use href="#c" x="449" y="154"/>
<use href="#c" x="397" y="153"/>
<use href="#c" x="484" y="150"/>
<use href="#c" x="499" y="143"/>
<use href="#c" x="508" y="144"/>
<use href="#c" x="510" y="149"/>
<use href="#c" x="534" y="151"/>
<use href="#c" x="544" y="160"/>
<use href="#c" x="492" y="160"/>
<use href="#c" x="490" y="163"/>
<use href="#c" x="479" y="165"/>
<use href="#c" x="505" y="165"/>
<use href="#c" x="519" y="161"/>
<use href="#c" x="517" y="166"/>
<use href="#c" x="412" y="166"/>
<use href="#c" x="447" y="166"/>
<use href="#c" x="465" y="174"/>
<use href="#c" x="498" y="176"/>
<use href="#c" x="535" y="176"/>
<use href="#c" x="438" y="178"/>
<use href="#c" x="453" y="182"/>
<use href="#c" x="384" y="179"/>
<use href="#c" x="392" y="185"/>
<use href="#c" x="401" y="187"/>
<use href="#c" x="407" y="187"/>
<use href="#c" x="425" y="187"/>
<use href="#c" x="468" y="187"/>
<use href="#c" x="367" y="190"/>
<use href="#c" x="521" y="182"/>
<use href="#c" x="529" y="182"/>
<use href="#c" x="546" y="181"/>
<use href="#c" x="546" y="189"/>
<use href="#c" x="489" y="186"/>
<use href="#c" x="492" y="187"/>
<use href="#c" x="501" y="192"/>
<use href="#c" x="499" y="197"/>
<use href="#c" x="499" y="201"/>
<use href="#c" x="414" y="200"/>
<use href="#c" x="426" y="204"/>
<use href="#c" x="439" y="204"/>
<use href="#c" x="442" y="202"/>
<use href="#c" x="457" y="206"/>
<use href="#c" x="472" y="205"/>
<use href="#c" x="476" y="205"/>
<use href="#c" x="486" y="206"/>
<use href="#c" x="490" y="200"/>
<use href="#c" x="518" y="210"/>
<use href="#c" x="530" y="205"/>
<use href="#c" x="539" y="205"/>
<use href="#c" x="545" y="208"/>
<use href="#c" x="404" y="217"/>
<use href="#c" x="450" y="215"/>
<use href="#c" x="447" y="223"/>
<use href="#c" x="480" y="219"/>
<use href="#c" x="492" y="219"/>
<use href="#c" x="499" y="218"/>
<use href="#c" x="499" y="224"/>
<use href="#c" x="533" y="219"/>
<use href="#c" x="543" y="219"/>
<use href="#c" x="399" y="227"/>
<use href="#c" x="407" y="230"/>
<use href="#c" x="418" y="231"/>
<use href="#c" x="471" y="229"/>
<use href="#c" x="527" y="231"/>
<use href="#c" x="536" y="231"/>
<use href="#c" x="576" y="130"/>
<use href="#c" x="605" y="134"/>
<use href="#c" x="672" y="116"/>
<use href="#c" x="725" y="113"/>
<use href="#c" x="640" y="127"/>
<use href="#c" x="651" y="133"/>
<use href="#c" x="659" y="141"/>
<use href="#c" x="661" y="143"/>
<use href="#c" x="645" y="145"/>
<use href="#c" x="649" y="145"/>
<use href="#c" x="582" y="153"/>
<use href="#c" x="583" y="158"/>
<use href="#c" x="579" y="162"/>
<use href="#c" x="577" y="168"/>
<use href="#c" x="564" y="165"/>
<use href="#c" x="617" y="160"/>
<use href="#c" x="658" y="164"/>
<use href="#c" x="664" y="172"/>
<use href="#c" x="657" y="179"/>
<use href="#c" x="598" y="176"/>
<use href="#c" x="570" y="181"/>
<use href="#c" x="715" y="165"/>
<use href="#c" x="706" y="170"/>
<use href="#c" x="724" y="182"/>
<use href="#c" x="643" y="202"/>
<use href="#c" x="669" y="205"/>
<use href="#c" x="670" y="216"/>
<use href="#c" x="683" y="227"/>
<use href="#c" x="557" y="213"/>
<use href="#c" x="137" y="238"/>
<use href="#c" x="151" y="246"/>
<use href="#c" x="31" y="253"/>
<use href="#c" x="73" y="270"/>
<use href="#c" x="74" y="285"/>
<use href="#c" x="177" y="264"/>
<use href="#c" x="161" y="295"/>
<use href="#c" x="54" y="341"/>
<use href="#c" x="208" y="240"/>
<use href="#c" x="216" y="246"/>
<use href="#c" x="262" y="237"/>
<use href="#c" x="257" y="242"/>
<use href="#c" x="337" y="240"/>
<use href="#c" x="359" y="234"/>
<use href="#c" x="319" y="252"/>
<use href="#c" x="296" y="261"/>
<use href="#c" x="331" y="264"/>
<use href="#c" x="320" y="270"/>
<use href="#c" x="341" y="272"/>
<use href="#c" x="352" y="280"/>
<use href="#c" x="342" y="285"/>
<use href="#c" x="318" y="282"/>
<use href="#c" x="316" y="285"/>
<use href="#c" x="209" y="265"/>
<use href="#c" x="218" y="267"/>
<use href="#c" x="262" y="266"/>
<use href="#c" x="266" y="276"/>
<use href="#c" x="219" y="281"/>
<use href="#c" x="222" y="297"/>
<use href="#c" x="237" y="296"/>
<use href="#c" x="210" y="317"/>
<use href="#c" x="201" y="324"/>
<use href="#c" x="299" y="321"/>
<use href="#c" x="302" y="323"/>
<use href="#c" x="333" y="317"/>
<use href="#c" x="306" y="345"/>
<use href="#c" x="356" y="337"/>
<use href="#c" x="355" y="346"/>
<use href="#c" x="427" y="245"/>
<use href="#c" x="435" y="244"/>
<use href="#c" x="461" y="241"/>
<use href="#c" x="464" y="247"/>
<use href="#c" x="462" y="253"/>
<use href="#c" x="469" y="258"/>
<use href="#c" x="440" y="259"/>
<use href="#c" x="441" y="262"/>
<use href="#c" x="513" y="240"/>
<use href="#c" x="509" y="248"/>
<use href="#c" x="502" y="250"/>
<use href="#c" x="504" y="251"/>
<use href="#c" x="526" y="252"/>
<use href="#c" x="543" y="240"/>
<use href="#c" x="511" y="265"/>
<use href="#c" x="520" y="267"/>
<use href="#c" x="530" y="267"/>
<use href="#c" x="496" y="274"/>
<use href="#c" x="495" y="278"/>
<use href="#c" x="492" y="281"/>
<use href="#c" x="523" y="283"/>
<use href="#c" x="401" y="273"/>
<use href="#c" x="385" y="289"/>
<use href="#c" x="413" y="287"/>
<use href="#c" x="375" y="299"/>
<use href="#c" x="431" y="296"/>
<use href="#c" x="432" y="300"/>
<use href="#c" x="423" y="304"/>
<use href="#c" x="419" y="309"/>
<use href="#c" x="452" y="295"/>
<use href="#c" x="471" y="303"/>
<use href="#c" x="477" y="306"/>
<use href="#c" x="483" y="301"/>
<use href="#c" x="506" y="300"/>
<use href="#c" x="530" y="308"/>
<use href="#c" x="537" y="310"/>
<use href="#c" x="547" y="311"/>
<use href="#c" x="491" y="317"/>
<use href="#c" x="501" y="317"/>
<use href="#c" x="528" y="319"/>
<use href="#c" x="533" y="320"/>
<use href="#c" x="525" y="329"/>
<use href="#c" x="452" y="322"/>
<use href="#c" x="449" y="329"/>
<use href="#c" x="497" y="330"/>
<use href="#c" x="406" y="330"/>
<use href="#c" x="456" y="343"/>
<use href="#c" x="501" y="344"/>
<use href="#c" x="383" y="348"/>
<use href="#c" x="422" y="349"/>
<use href="#c" x="546" y="344"/>
<use href="#c" x="475" y="351"/>
<use href="#c" x="569" y="235"/>
<use href="#c" x="578" y="234"/>
<use href="#c" x="586" y="234"/>
<use href="#c" x="624" y="240"/>
<use href="#c" x="624" y="232"/>
<use href="#c" x="656" y="239"/>
<use href="#c" x="660" y="242"/>
<use href="#c" x="679" y="251"/>
<use href="#c" x="553" y="251"/>
<use href="#c" x="572" y="254"/>
<use href="#c" x="624" y="254"/>
<use href="#c" x="630" y="254"/>
<use href="#c" x="629" y="264"/>
<use href="#c" x="654" y="263"/>
<use href="#c" x="597" y="262"/>
<use href="#c" x="607" y="270"/>
<use href="#c" x="604" y="277"/>
<use href="#c" x="589" y="277"/>
<use href="#c" x="632" y="278"/>
<use href="#c" x="575" y="280"/>
<use href="#c" x="568" y="285"/>
<use href="#c" x="578" y="285"/>
<use href="#c" x="586" y="284"/>
<use href="#c" x="569" y="294"/>
<use href="#c" x="686" y="286"/>
<use href="#c" x="676" y="298"/>
<use href="#c" x="730" y="301"/>
<use href="#c" x="601" y="301"/>
<use href="#c" x="556" y="314"/>
<use href="#c" x="638" y="327"/>
<use href="#c" x="660" y="328"/>
<use href="#c" x="626" y="338"/>
<use href="#c" x="608" y="344"/>
<use href="#c" x="594" y="348"/>
<use href="#c" x="636" y="348"/>
<use href="#c" x="567" y="347"/>
<use href="#c" x="558" y="347"/>
<use href="#c" x="47" y="357"/>
<use href="#c" x="118" y="372"/>
<use href="#c" x="162" y="392"/>
<use href="#c" x="82" y="410"/>
<use href="#c" x="124" y="412"/>
<use href="#c" x="118" y="423"/>
<use href="#c" x="113" y="425"/>
<use href="#c" x="178" y="417"/>
<use href="#c" x="48" y="439"/>
<use href="#c" x="26" y="449"/>
<use href="#c" x="41" y="464"/>
<use href="#c" x="309" y="361"/>
<use href="#c" x="230" y="367"/>
<use href="#c" x="220" y="372"/>
<use href="#c" x="238" y="375"/>
<use href="#c" x="230" y="384"/>
<use href="#c" x="317" y="379"/>
<use href="#c" x="309" y="382"/>
<use href="#c" x="354" y="389"/>
<use href="#c" x="265" y="404"/>
<use href="#c" x="261" y="411"/>
<use href="#c" x="285" y="412"/>
<use href="#c" x="280" y="415"/>
<use href="#c" x="334" y="411"/>
<use href="#c" x="214" y="410"/>
<use href="#c" x="236" y="420"/>
<use href="#c" x="290" y="428"/>
<use href="#c" x="300" y="435"/>
<use href="#c" x="309" y="432"/>
<use href="#c" x="224" y="437"/>
<use href="#c" x="252" y="436"/>
<use href="#c" x="352" y="438"/>
<use href="#c" x="291" y="447"/>
<use href="#c" x="243" y="454"/>
<use href="#c" x="185" y="458"/>
<use href="#c" x="264" y="470"/>
<use href="#c" x="322" y="470"/>
<use href="#c" x="210" y="474"/>
<use href="#c" x="351" y="474"/>
<use href="#c" x="427" y="356"/>
<use href="#c" x="439" y="356"/>
<use href="#c" x="483" y="370"/>
<use href="#c" x="377" y="375"/>
<use href="#c" x="439" y="378"/>
<use href="#c" x="378" y="392"/>
<use href="#c" x="443" y="404"/>
<use href="#c" x="460" y="413"/>
<use href="#c" x="488" y="409"/>
<use href="#c" x="499" y="411"/>
<use href="#c" x="365" y="424"/>
<use href="#c" x="402" y="422"/>
<use href="#c" x="384" y="432"/>
<use href="#c" x="436" y="429"/>
<use href="#c" x="511" y="430"/>
<use href="#c" x="541" y="421"/>
<use href="#c" x="483" y="436"/>
<use href="#c" x="508" y="445"/>
<use href="#c" x="371" y="445"/>
<use href="#c" x="477" y="452"/>
<use href="#c" x="435" y="459"/>
<use href="#c" x="372" y="462"/>
<use href="#c" x="555" y="352"/>
<use href="#c" x="587" y="358"/>
<use href="#c" x="612" y="363"/>
<use href="#c" x="564" y="372"/>
<use href="#c" x="601" y="371"/>
<use href="#c" x="636" y="372"/>
<use href="#c" x="728" y="365"/>
<use href="#c" x="720" y="376"/>
<use href="#c" x="721" y="379"/>
<use href="#c" x="612" y="391"/>
<use href="#c" x="629" y="392"/>
<use href="#c" x="648" y="393"/>
<use href="#c" x="665" y="399"/>
<use href="#c" x="581" y="402"/>
<use href="#c" x="579" y="407"/>
<use href="#c" x="587" y="412"/>
<use href="#c" x="610" y="409"/>
<use href="#c" x="630" y="416"/>
<use href="#c" x="570" y="419"/>
<use href="#c" x="719" y="419"/>
<use href="#c" x="624" y="442"/>
<use href="#c" x="721" y="453"/>
<use href="#c" x="553" y="458"/>
<use href="#c" x="520" y="111"/>
<use href="#c" x="522" y="115"/>
<use href="#c" x="530" y="115"/>
<use href="#c" x="533" y="111"/>
<use href="#c" x="536" y="119"/>
<use href="#c" x="544" y="112"/>
<use href="#c" x="544" y="117"/>
<use href="#c" x="557" y="111"/>
<use href="#c" x="557" y="115"/>
<use href="#c" x="565" y="112"/>
<use href="#c" x="553" y="125"/>
<use href="#c" x="527" y="130"/>
<use href="#c" x="541" y="129"/>
<use href="#c" x="533" y="126"/>
<use href="#c" x="547" y="124"/>
</svg></div>
<div class="abs" style="left:0;top:779px;width:738px;height:49px;background:#fff;"></div>
<div class="abs" style="left:0px;top:783px;width:738px;height:20px;border:1px solid #000;background:linear-gradient(to right,#000,#fff);"></div>
<div class="abs" style="left:72.5px;top:803px;width:1px;height:3px;background:#000;"></div>
<span class="t" style="left:32px;width:80px;text-align:center;top:812px;letter-spacing:-0.09px;">-3.2e-07</span>
<div class="abs" style="left:147px;top:803px;width:1px;height:3px;background:#000;"></div>
<span class="t" style="left:106.5px;width:80px;text-align:center;top:812px;letter-spacing:-0.09px;">-2.2e-07</span>
<div class="abs" style="left:221px;top:803px;width:1px;height:3px;background:#000;"></div>
<span class="t" style="left:180.5px;width:80px;text-align:center;top:812px;letter-spacing:-0.09px;">-1.1e-07</span>
<div class="abs" style="left:295px;top:803px;width:1px;height:3px;background:#000;"></div>
<span class="t" style="left:254.5px;width:80px;text-align:center;top:812px;letter-spacing:-0.09px;">-1.5e-08</span>
<div class="abs" style="left:369px;top:803px;width:1px;height:3px;background:#000;"></div>
<span class="t" style="left:328.5px;width:80px;text-align:center;top:812px;letter-spacing:0.04px;">8.6e-08</span>
<div class="abs" style="left:441.5px;top:803px;width:1px;height:3px;background:#000;"></div>
<span class="t" style="left:401px;width:80px;text-align:center;top:812px;letter-spacing:0.04px;">1.9e-07</span>
<div class="abs" style="left:516px;top:803px;width:1px;height:3px;background:#000;"></div>
<span class="t" style="left:475.5px;width:80px;text-align:center;top:812px;letter-spacing:0.04px;">2.9e-07</span>
<div class="abs" style="left:590px;top:803px;width:1px;height:3px;background:#000;"></div>
<span class="t" style="left:549.5px;width:80px;text-align:center;top:812px;letter-spacing:0.04px;">3.9e-07</span>
<div class="abs" style="left:664px;top:803px;width:1px;height:3px;background:#000;"></div>
<span class="t" style="left:623.5px;width:80px;text-align:center;top:812px;letter-spacing:0.04px;">4.9e-07</span>
<div class="abs" style="left:721px;top:0;width:16px;height:828px;background:linear-gradient(to right,rgba(0,0,0,0),rgba(0,0,0,0.05) 40%,rgba(0,0,0,0.32));"></div>
</div>
<div class="w" id="cat" style="left:739px;top:1px;width:546px;height:829px;background:#d9d9d9;border-radius:6px 6px 0 0;">
<div class="abs" style="left:0;top:0;width:546px;height:36px;background:#f2f2f2;"></div>
<div class="hl" style="left:0px;top:36px;width:546px;background:#9a9a9a;"></div>
<div class="hl" style="left:0px;top:37px;width:546px;background:#fff;"></div>
<div class="abs" style="left:0;top:0;width:1px;height:829px;background:#8a8a8a;"></div>
<span class="t" style="left:0;width:546px;text-align:center;top:8px;height:20px;line-height:20px;font-size:15px;color:#3d3d3d;">Catalog Tool</span>
<svg style="position:absolute;left:523px;top:13px" width="10" height="10" viewBox="0 0 10 10"><path d="M1.5 1.5 L8.5 8.5 M8.5 1.5 L1.5 8.5" stroke="#3d3d3d" stroke-width="2" fill="none"/></svg>
<span class="t " style="left:8px;top:44px;letter-spacing:-0.09px;">File</span>
<span class="t " style="left:42px;top:44px;letter-spacing:0.33px;">Edit</span>
<span class="t " style="left:77px;top:44px;">Catalog Server</span>
<span class="t " style="left:172px;top:44px;letter-spacing:0.03px;">Name Server</span>
<span class="t " style="left:256px;top:44px;letter-spacing:-0.17px;">Symbol</span>
<span class="t " style="left:309px;top:44px;letter-spacing:0.3px;">Preferences</span>
<div class="hl" style="left:1px;top:66px;width:545px;background:#828282;"></div>
<div class="hl" style="left:1px;top:67px;width:545px;background:#e4e4e4;"></div>
<div class="abs" style="left:1px;top:75px;width:545px;height:89px;border:1px solid;border-color:#828282 #fff #fff #828282;"></div>
<div class="abs" style="left:2px;top:76px;width:543px;height:87px;border:1px solid;border-color:#fff #828282 #828282 #fff;"></div>
<span class="lf" style="left:7px;top:67px;padding:0 1px;letter-spacing:-0.05px;">Catalog</span>
<span class="t " style="left:9px;top:91px;">Name</span>
<span class="t " style="left:9px;top:116px;letter-spacing:0.47px;">Identification</span>
<span class="t " style="left:9px;top:141px;letter-spacing:0.29px;">Reference</span>
<div class="ent " style="left:91px;top:88px;width:426px;height:21px;line-height:20px;letter-spacing:0.3px;padding-left:2.5px;">orion.tsv</div>
<div class="ent " style="left:91px;top:113px;width:426px;height:21px;"></div>
<div class="ent " style="left:91px;top:138px;width:97px;height:21px;line-height:20px;letter-spacing:0.66px;padding-left:2.5px;">tool</div>
<div class="abs" style="left:1px;top:173px;width:545px;height:98px;border:1px solid;border-color:#828282 #fff #fff #828282;"></div>
<div class="abs" style="left:2px;top:174px;width:543px;height:96px;border:1px solid;border-color:#fff #828282 #828282 #fff;"></div>
<span class="lf" style="left:7px;top:165px;padding:0 1px;letter-spacing:0.39px;">Object</span>
<span class="t " style="left:9px;top:189px;">Name</span>
<span class="t " style="left:9px;top:246px;letter-spacing:-0.39px;">Radius</span>
<span class="t " style="left:9px;top:215px;font-family:'Liberation Serif','DejaVu Serif',serif;font-size:15px;-webkit-text-stroke:0;">α</span>
<span class="t " style="left:161px;top:215px;font-size:13px;-webkit-text-stroke:0.1px;">δ</span>
<div class="ent wh" style="left:52px;top:187px;width:424px;height:19px;"></div>
<div class="ent wh" style="left:52px;top:214px;width:102px;height:19px;"></div>
<div class="ent wh" style="left:248px;top:214px;width:102px;height:19px;"></div>
<div class="mb" style="left:354px;top:211px;width:68px;height:25px;line-height:24px;padding-left:11.5px;letter-spacing:0.67px;">fk5<i></i></div>
<div class="btn " style="left:426px;top:211px;width:74px;height:26px;line-height:24px;letter-spacing:0.22px;">Update</div>
<div class="ent wh" style="left:52px;top:244px;width:102px;height:19px;"></div>
<div class="mb" style="left:158px;top:241px;width:86px;height:25px;line-height:24px;padding-left:11px;letter-spacing:0.16px;">arcmin<i></i></div>
<div class="abs" style="left:1px;top:280px;width:545px;height:128px;border:1px solid;border-color:#828282 #fff #fff #828282;"></div>
<div class="abs" style="left:2px;top:281px;width:543px;height:126px;border:1px solid;border-color:#fff #828282 #828282 #fff;"></div>
<span class="lf" style="left:7px;top:272px;padding:0 1px;letter-spacing:0.26px;">Table</span>
<span class="t " style="left:9px;top:298px;letter-spacing:0.39px;">Filter</span>
<span class="t " style="left:9px;top:328px;letter-spacing:0.25px;">Sort</span>
<span class="t " style="left:9px;top:355px;letter-spacing:-0.38px;">Max Rows</span>
<span class="t " style="left:9px;top:381px;font-family:'Liberation Serif','DejaVu Serif',serif;font-size:15px;-webkit-text-stroke:0;">α</span>
<div class="ent wh" style="left:71px;top:296px;width:354px;height:19px;"></div>
<div class="btn " style="left:445px;top:293px;width:74px;height:26px;line-height:24px;letter-spacing:0.33px;">Edit</div>
<div class="mb" style="left:71px;top:323px;width:147px;height:25px;"><i></i></div>
<svg style="position:absolute;left:222px;top:328px" width="14" height="14" viewBox="0 0 14 14"><path d="M7 1.8 L12.2 7 L7 12.2 L1.8 7 Z" fill="#4a6984"/><path d="M1.8 7 L7 1.8 L12.2 7" fill="none" stroke="#828282" stroke-width="0.9"/><path d="M1.8 7 L7 12.2 L12.2 7" fill="none" stroke="#fff" stroke-width="0.9"/></svg>
<span class="t " style="left:241.3px;top:328px;">Increase</span>
<svg style="position:absolute;left:294px;top:328px" width="14" height="14" viewBox="0 0 14 14"><path d="M7 1.8 L12.2 7 L7 12.2 L1.8 7 Z" fill="#fff"/><path d="M1.8 7 L7 1.8 L12.2 7" fill="none" stroke="#828282" stroke-width="0.9"/><path d="M1.8 7 L7 12.2 L12.2 7" fill="none" stroke="#fff" stroke-width="0.9"/></svg>
<span class="t " style="left:313.3px;top:328px;letter-spacing:-0.04px;">Decrease</span>
<div class="ent wh" style="left:71px;top:353px;width:102px;height:19px;line-height:18px;letter-spacing:0.33px;padding-left:1.5px;">5000</div>
<span class="t " style="left:225.4px;top:355px;">Found</span>
<div class="ent " style="left:294px;top:352px;width:104px;height:21px;line-height:20px;letter-spacing:0.33px;padding-left:2.5px;">1539</div>
<div class="mb" style="left:71px;top:377px;width:147px;height:25px;line-height:24px;padding-left:11.5px;letter-spacing:0.16px;">ra<i></i></div>
<span class="t " style="left:226px;top:381px;font-size:13px;-webkit-text-stroke:0.1px;">δ</span>
<div class="mb" style="left:294px;top:377px;width:147px;height:25px;line-height:24px;padding-left:11.5px;letter-spacing:0.22px;">dec<i></i></div>
<div class="mb" style="left:445px;top:377px;width:68px;height:25px;line-height:24px;padding-left:11.5px;letter-spacing:0.67px;">fk5<i></i></div>
<div class="abs" id="tbl" style="left:2px;top:408px;width:527px;height:341px;overflow:hidden;background:#d9d9d9;">
<span class="t" style="left:1.5px;top:4px;letter-spacing:-0px;">name</span>
<span class="t" style="left:101.5px;top:4px;letter-spacing:0.3px;">match_type</span>
<span class="t" style="left:201.5px;top:4px;letter-spacing:0.16px;">ra</span>
<span class="t" style="left:301.5px;top:4px;letter-spacing:0.22px;">dec</span>
<span class="t" style="left:401.5px;top:4px;letter-spacing:0.23px;">err_ellipse_r0</span>
<span class="t" style="left:501.5px;top:4px;letter-spacing:0.23px;">err_ellipse_r1</span>
<div class="cell" style="left:0px;top:21px;padding:0px 0 0 0.5px;letter-spacing:-0.11px;">2CXO J053403.8-0</div>
<div class="cell" style="left:100px;top:21px;padding:0px 0 0 0.5px;letter-spacing:0px;">a</div>
<div class="cell" style="left:200px;top:21px;padding:0px 0 0 0.5px;letter-spacing:0.24px;">8.351599e+01</div>
<div class="cell" style="left:300px;top:21px;padding:0px 0 0 0.5px;letter-spacing:0.15px;">-5.371919e+00</div>
<div class="cell" style="left:400px;top:21px;padding:0px 0 0 0px;letter-spacing:0.16px;"> 4.26</div>
<div class="cell" style="left:500px;top:21px;padding:0px 0 0 0px;letter-spacing:0.16px;"> 3.07</div>
<div class="cell" style="left:0px;top:40px;padding:0px 0 0 0.5px;letter-spacing:-0.11px;">2CXO J053405.9-0</div>
<div class="cell" style="left:100px;top:40px;padding:0px 0 0 0.5px;letter-spacing:0px;">a</div>
<div class="cell" style="left:200px;top:40px;padding:0px 0 0 0.5px;letter-spacing:0.24px;">8.352483e+01</div>
<div class="cell" style="left:300px;top:40px;padding:0px 0 0 0.5px;letter-spacing:0.15px;">-5.378231e+00</div>
<div class="cell" style="left:400px;top:40px;padding:0px 0 0 0px;letter-spacing:0.16px;"> 2.06</div>
<div class="cell" style="left:500px;top:40px;padding:0px 0 0 0px;letter-spacing:0.16px;"> 1.81</div>
<div class="cell" style="left:0px;top:59px;padding:0px 0 0 0.5px;letter-spacing:-0.11px;">2CXO J053407.0-0</div>
<div class="cell" style="left:100px;top:59px;padding:0px 0 0 0.5px;letter-spacing:0px;">u</div>
<div class="cell" style="left:200px;top:59px;padding:0px 0 0 0.5px;letter-spacing:0.24px;">8.352944e+01</div>
<div class="cell" style="left:300px;top:59px;padding:0px 0 0 0.5px;letter-spacing:0.15px;">-5.433293e+00</div>
<div class="cell" style="left:400px;top:59px;padding:0px 0 0 0px;letter-spacing:0.16px;"> 1.55</div>
<div class="cell" style="left:500px;top:59px;padding:0px 0 0 0px;letter-spacing:0.16px;"> 1.32</div>
<div class="cell" style="left:0px;top:78px;padding:0px 0 0 0.5px;letter-spacing:-0.11px;">2CXO J053407.2-0</div>
<div class="cell" style="left:100px;top:78px;padding:0px 0 0 0.5px;letter-spacing:0px;">u</div>
<div class="cell" style="left:200px;top:78px;padding:0px 0 0 0.5px;letter-spacing:0.24px;">8.353022e+01</div>
<div class="cell" style="left:300px;top:78px;padding:0px 0 0 0.5px;letter-spacing:0.15px;">-5.194769e+00</div>
<div class="cell" style="left:400px;top:78px;padding:0px 0 0 0px;letter-spacing:0.16px;"> 2.02</div>
<div class="cell" style="left:500px;top:78px;padding:0px 0 0 0px;letter-spacing:0.16px;"> 1.37</div>
<div class="cell" style="left:0px;top:97px;padding:0px 0 0 0.5px;letter-spacing:-0.11px;">2CXO J053407.2-0</div>
<div class="cell" style="left:100px;top:97px;padding:0px 0 0 0.5px;letter-spacing:0px;">u</div>
<div class="cell" style="left:200px;top:97px;padding:0px 0 0 0.5px;letter-spacing:0.24px;">8.353038e+01</div>
<div class="cell" style="left:300px;top:97px;padding:0px 0 0 0.5px;letter-spacing:0.15px;">-5.228002e+00</div>
<div class="cell" style="left:400px;top:97px;padding:0px 0 0 0px;letter-spacing:0.2px;"> 14.32</div>
<div class="cell" style="left:500px;top:97px;padding:0px 0 0 0px;letter-spacing:0.16px;"> 9.26</div>
<div class="cell" style="left:0px;top:116px;padding:0px 0 0 0.5px;letter-spacing:-0.11px;">2CXO J053408.9-0</div>
<div class="cell" style="left:100px;top:116px;padding:0px 0 0 0.5px;letter-spacing:0px;">u</div>
<div class="cell" style="left:200px;top:116px;padding:0px 0 0 0.5px;letter-spacing:0.24px;">8.353737e+01</div>
<div class="cell" style="left:300px;top:116px;padding:0px 0 0 0.5px;letter-spacing:0.15px;">-5.401594e+00</div>
<div class="cell" style="left:400px;top:116px;padding:0px 0 0 0px;letter-spacing:0.16px;"> 1.09</div>
<div class="cell" style="left:500px;top:116px;padding:0px 0 0 0px;letter-spacing:0.16px;"> 1.02</div>
<div class="cell" style="left:0px;top:135px;padding:0px 0 0 0.5px;letter-spacing:-0.05px;">2CXO J053411.1-0</div>
<div class="cell" style="left:100px;top:135px;padding:0px 0 0 0.5px;letter-spacing:0px;">u</div>
<div class="cell" style="left:200px;top:135px;padding:0px 0 0 0.5px;letter-spacing:0.24px;">8.354632e+01</div>
<div class="cell" style="left:300px;top:135px;padding:0px 0 0 0.5px;letter-spacing:0.15px;">-5.381724e+00</div>
<div class="cell" style="left:400px;top:135px;padding:0px 0 0 0px;letter-spacing:0.16px;"> 1.10</div>
<div class="cell" style="left:500px;top:135px;padding:0px 0 0 0px;letter-spacing:0.16px;"> 0.97</div>
<div class="cell" style="left:0px;top:154px;padding:0px 0 0 0.5px;letter-spacing:-0.11px;">2CXO J053412.0-0</div>
<div class="cell" style="left:100px;top:154px;padding:0px 0 0 0.5px;letter-spacing:0px;">n</div>
<div class="cell" style="left:200px;top:154px;padding:0px 0 0 0.5px;letter-spacing:0.24px;">8.355006e+01</div>
<div class="cell" style="left:300px;top:154px;padding:0px 0 0 0.5px;letter-spacing:0.15px;">-5.405224e+00</div>
<div class="cell" style="left:400px;top:154px;padding:0px 0 0 0px;letter-spacing:0.16px;"> 2.98</div>
<div class="cell" style="left:500px;top:154px;padding:0px 0 0 0px;letter-spacing:0.16px;"> 2.33</div>
<div class="cell" style="left:0px;top:173px;padding:0px 0 0 0.5px;letter-spacing:-0.11px;">2CXO J053415.0-0</div>
<div class="cell" style="left:100px;top:173px;padding:0px 0 0 0.5px;letter-spacing:0px;">u</div>
<div class="cell" style="left:200px;top:173px;padding:0px 0 0 0.5px;letter-spacing:0.24px;">8.356258e+01</div>
<div class="cell" style="left:300px;top:173px;padding:0px 0 0 0.5px;letter-spacing:0.15px;">-5.261506e+00</div>
<div class="cell" style="left:400px;top:173px;padding:0px 0 0 0px;letter-spacing:0.16px;"> 9.31</div>
<div class="cell" style="left:500px;top:173px;padding:0px 0 0 0px;letter-spacing:0.16px;"> 5.60</div>
<div class="cell" style="left:0px;top:192px;padding:0px 0 0 0.5px;letter-spacing:-0.11px;">2CXO J053416.3-0</div>
<div class="cell" style="left:100px;top:192px;padding:0px 0 0 0.5px;letter-spacing:0px;">n</div>
<div class="cell" style="left:200px;top:192px;padding:0px 0 0 0.5px;letter-spacing:0.24px;">8.356792e+01</div>
<div class="cell" style="left:300px;top:192px;padding:0px 0 0 0.5px;letter-spacing:0.15px;">-5.419612e+00</div>
<div class="cell" style="left:400px;top:192px;padding:0px 0 0 0px;letter-spacing:0.16px;"> 5.15</div>
<div class="cell" style="left:500px;top:192px;padding:0px 0 0 0px;letter-spacing:0.16px;"> 4.45</div>
<div class="cell" style="left:0px;top:211px;padding:0px 0 0 0.5px;letter-spacing:-0.11px;">2CXO J053418.9-0</div>
<div class="cell" style="left:100px;top:211px;padding:0px 0 0 0.5px;letter-spacing:0px;">n</div>
<div class="cell" style="left:200px;top:211px;padding:0px 0 0 0.5px;letter-spacing:0.24px;">8.357884e+01</div>
<div class="cell" style="left:300px;top:211px;padding:0px 0 0 0.5px;letter-spacing:0.15px;">-5.453752e+00</div>
<div class="cell" style="left:400px;top:211px;padding:0px 0 0 0px;letter-spacing:0.16px;"> 6.56</div>
<div class="cell" style="left:500px;top:211px;padding:0px 0 0 0px;letter-spacing:0.16px;"> 6.56</div>
<div class="cell" style="left:0px;top:230px;padding:0px 0 0 0.5px;letter-spacing:-0.11px;">2CXO J053420.8-0</div>
<div class="cell" style="left:100px;top:230px;padding:0px 0 0 0.5px;letter-spacing:0px;">u</div>
<div class="cell" style="left:200px;top:230px;padding:0px 0 0 0.5px;letter-spacing:0.24px;">8.358677e+01</div>
<div class="cell" style="left:300px;top:230px;padding:0px 0 0 0.5px;letter-spacing:0.15px;">-5.391048e+00</div>
<div class="cell" style="left:400px;top:230px;padding:0px 0 0 0px;letter-spacing:0.16px;"> 1.44</div>
<div class="cell" style="left:500px;top:230px;padding:0px 0 0 0px;letter-spacing:0.16px;"> 1.08</div>
<div class="cell" style="left:0px;top:249px;padding:0px 0 0 0.5px;letter-spacing:-0.11px;">2CXO J053421.1-0</div>
<div class="cell" style="left:100px;top:249px;padding:0px 0 0 0.5px;letter-spacing:0px;">u</div>
<div class="cell" style="left:200px;top:249px;padding:0px 0 0 0.5px;letter-spacing:0.24px;">8.358803e+01</div>
<div class="cell" style="left:300px;top:249px;padding:0px 0 0 0.5px;letter-spacing:0.15px;">-5.413578e+00</div>
<div class="cell" style="left:400px;top:249px;padding:0px 0 0 0px;letter-spacing:0.16px;"> 2.51</div>
<div class="cell" style="left:500px;top:249px;padding:0px 0 0 0px;letter-spacing:0.16px;"> 2.10</div>
<div class="cell" style="left:0px;top:268px;padding:0px 0 0 0.5px;letter-spacing:-0.11px;">2CXO J053423.9-0</div>
<div class="cell" style="left:100px;top:268px;padding:0px 0 0 0.5px;letter-spacing:0px;">u</div>
<div class="cell" style="left:200px;top:268px;padding:0px 0 0 0.5px;letter-spacing:0.24px;">8.359991e+01</div>
<div class="cell" style="left:300px;top:268px;padding:0px 0 0 0.5px;letter-spacing:0.15px;">-5.260756e+00</div>
<div class="cell" style="left:400px;top:268px;padding:0px 0 0 0px;letter-spacing:0.16px;"> 2.77</div>
<div class="cell" style="left:500px;top:268px;padding:0px 0 0 0px;letter-spacing:0.16px;"> 1.66</div>
<div class="cell" style="left:0px;top:287px;padding:0px 0 0 0.5px;letter-spacing:-0.11px;">2CXO J053424.9-0</div>
<div class="cell" style="left:100px;top:287px;padding:0px 0 0 0.5px;letter-spacing:0px;">u</div>
<div class="cell" style="left:200px;top:287px;padding:0px 0 0 0.5px;letter-spacing:0.24px;">8.360397e+01</div>
<div class="cell" style="left:300px;top:287px;padding:0px 0 0 0.5px;letter-spacing:0.15px;">-5.368182e+00</div>
<div class="cell" style="left:400px;top:287px;padding:0px 0 0 0px;letter-spacing:0.16px;"> 0.83</div>
<div class="cell" style="left:500px;top:287px;padding:0px 0 0 0px;letter-spacing:0.16px;"> 0.80</div>
<div class="cell" style="left:0px;top:306px;padding:0px 0 0 0.5px;letter-spacing:-0.11px;">2CXO J053426.1-0</div>
<div class="cell" style="left:100px;top:306px;padding:0px 0 0 0.5px;letter-spacing:0px;">u</div>
<div class="cell" style="left:200px;top:306px;padding:0px 0 0 0.5px;letter-spacing:0.24px;">8.360899e+01</div>
<div class="cell" style="left:300px;top:306px;padding:0px 0 0 0.5px;letter-spacing:0.15px;">-5.441783e+00</div>
<div class="cell" style="left:400px;top:306px;padding:0px 0 0 0px;letter-spacing:0.16px;"> 0.93</div>
<div class="cell" style="left:500px;top:306px;padding:0px 0 0 0px;letter-spacing:0.16px;"> 0.87</div>
<div class="cell" style="left:0px;top:325px;padding:0px 0 0 0.5px;letter-spacing:-0.11px;">2CXO J053426.2-0</div>
<div class="cell" style="left:100px;top:325px;padding:0px 0 0 0.5px;letter-spacing:0px;">a</div>
<div class="cell" style="left:200px;top:325px;padding:0px 0 0 0.5px;letter-spacing:0.24px;">8.360921e+01</div>
<div class="cell" style="left:300px;top:325px;padding:0px 0 0 0.5px;letter-spacing:0.15px;">-5.405100e+00</div>
<div class="cell" style="left:400px;top:325px;padding:0px 0 0 0px;letter-spacing:0.16px;"> 0.87</div>
<div class="cell" style="left:500px;top:325px;padding:0px 0 0 0px;letter-spacing:0.16px;"> 0.87</div>
</div>
<div class="abs" style="left:531px;top:408px;width:15px;height:343px;background:#c3c3c3;border:1px solid;border-color:#828282 #fff #fff #828282;"></div>
<div class="btn" style="left:532px;top:409px;width:13px;height:10px;"></div>
<svg style="position:absolute;left:532px;top:409px" width="13" height="10" viewBox="0 0 13 10"><path d="M2.7 7.5 L6.5 2.7 L10.3 7.5 Z" fill="#000"/></svg>
<div class="btn" style="left:532px;top:419px;width:13px;height:13px;"></div>
<div class="btn" style="left:532px;top:740px;width:13px;height:10px;"></div>
<svg style="position:absolute;left:532px;top:740px" width="13" height="10" viewBox="0 0 13 10"><path d="M2.7 2.8 L6.5 7.6 L10.3 2.8 Z" fill="#000"/></svg>
<div class="abs" style="left:1px;top:751px;width:530px;height:15px;background:#c3c3c3;border:1px solid;border-color:#828282 #fff #fff #828282;"></div>
<div class="btn" style="left:2px;top:752px;width:10px;height:13px;"></div>
<svg style="position:absolute;left:2px;top:752px" width="10" height="13" viewBox="0 0 10 13"><path d="M7.3 2.7 L2.5 6.5 L7.3 10.3 Z" fill="#000"/></svg>
<div class="btn" style="left:12px;top:752px;width:147px;height:13px;"></div>
<div class="btn" style="left:520px;top:752px;width:10px;height:13px;"></div>
<svg style="position:absolute;left:520px;top:752px" width="10" height="13" viewBox="0 0 10 13"><path d="M2.8 2.7 L7.6 6.5 L2.8 10.3 Z" fill="#000"/></svg>
<div class="hl" style="left:1px;top:767px;width:545px;background:#828282;"></div>
<span class="t " style="left:5.2px;top:773px;">Status</span>
<span class="t " style="left:49.6px;top:773px;letter-spacing:0.08px;">Done</span>
<div class="hl" style="left:1px;top:793px;width:545px;background:#828282;"></div>
<div class="hl" style="left:1px;top:794px;width:545px;background:#fff;"></div>
<div class="btn " style="left:2px;top:799px;width:74px;height:26px;line-height:24px;letter-spacing:0.29px;">Retrieve</div>
<div class="btn dis" style="left:80px;top:799px;width:74px;height:26px;line-height:24px;letter-spacing:-0.23px;">Cancel</div>
<div class="btn " style="left:158px;top:799px;width:74px;height:26px;line-height:24px;letter-spacing:0.39px;">Filter</div>
<div class="btn " style="left:236px;top:799px;width:74px;height:26px;line-height:24px;letter-spacing:-0.14px;">Clear</div>
<div class="btn " style="left:314px;top:799px;width:74px;height:26px;line-height:24px;letter-spacing:-0.6px;">SAMP</div>
<div class="btn " style="left:392px;top:799px;width:74px;height:26px;line-height:24px;letter-spacing:0.33px;">Plot</div>
<div class="btn " style="left:470px;top:799px;width:74px;height:26px;line-height:24px;letter-spacing:-0.34px;">Close</div>
</div>
</body></html>
